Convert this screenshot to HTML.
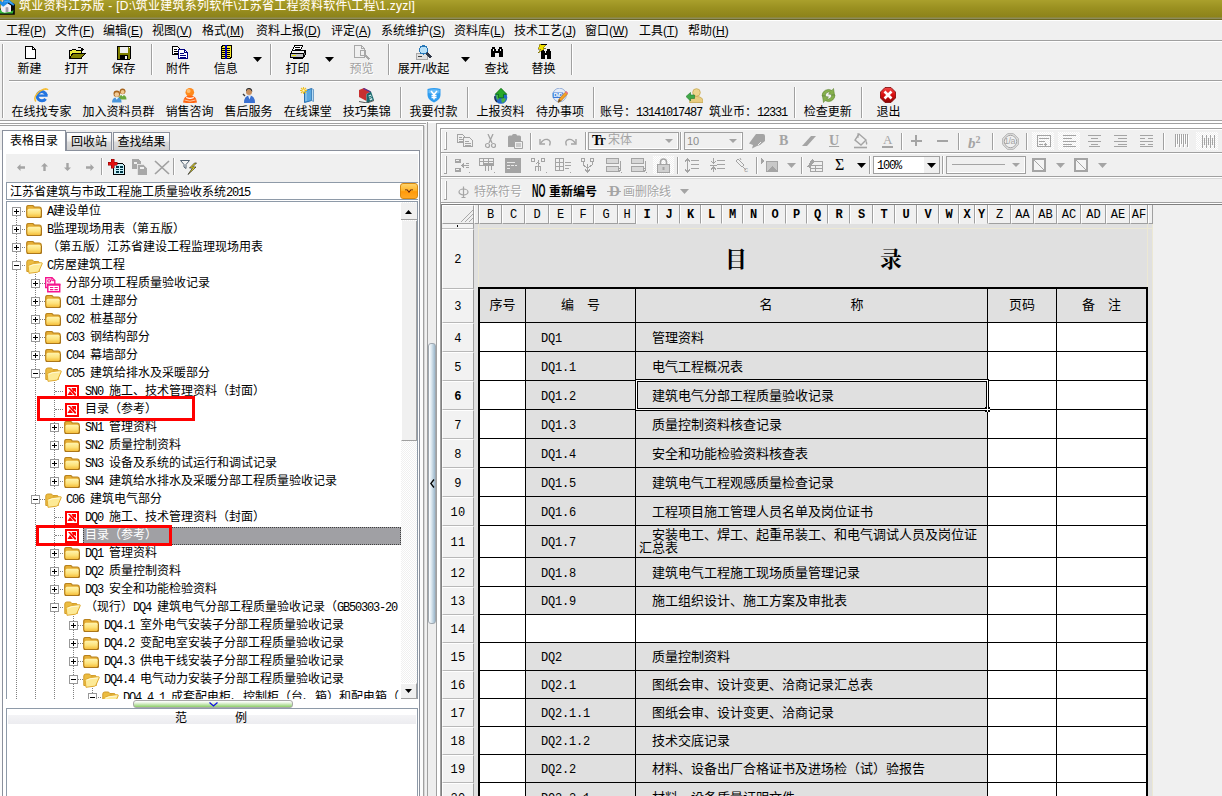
<!DOCTYPE html><html lang="zh-CN"><head><meta charset="utf-8"><title>筑业资料江苏版</title><style>
*{box-sizing:border-box;margin:0;padding:0}
html,body{width:1222px;height:796px;overflow:hidden;background:#f0f0f0}
body{position:relative;font:12px/14px "Liberation Sans","Noto Sans CJK SC",sans-serif;color:#000}
.a{position:absolute}
.ui{font-family:"Liberation Sans","Noto Sans CJK SC",sans-serif;font-size:12px;line-height:14px;white-space:nowrap}
.bm{font-family:"Liberation Mono","Noto Sans CJK SC",monospace;font-size:12px;line-height:14px;white-space:nowrap}
.bm i{font-style:normal;font-size:12px;letter-spacing:-1.2px}
.c13{font-family:"Liberation Mono","Noto Sans CJK SC",monospace;font-size:13px;line-height:13px;white-space:nowrap}
.c13 i{font-style:normal;font-size:12px;letter-spacing:-0.2px}
u{text-decoration:underline}
.vs{position:absolute;width:2px;border-left:1px solid #a0a0a0;border-right:1px solid #fff}
.hl{position:absolute;height:1px}
.tbl{position:absolute;text-align:center;white-space:nowrap}
</style></head><body>
<div class="a" style="left:0;top:0;width:1222px;height:20px;background:linear-gradient(#aaa02c 0,#9a9020 8px,#8d831a 17px,#8d8b5c 18px,#8d8b5c 19px,#6b6724 19px)"></div>
<svg class="a" style="left:0;top:0" width="16" height="16" viewBox="0 0 16 16">
<path d="M8 0.500L15 4.300 14.800 14.700 0 14.700 0 9Z" fill="#0a0a08"/>
<path d="M0 9.800Q4 9 7 10.500T13.600 10.300L12.800 13.600 0 13.600Z" fill="#35b436"/>
<path d="M0.800 5.500L6 2.200 11 5.500V11.800L7 12.300 4.500 12.800 2 11.800 0.800 9.500Z" fill="#f6eff4"/>
<path d="M5.600 7.600Q7 6.400 8.400 7.600V12H5.600Z" fill="#a79cab"/>
<path d="M1.600 0H3.200L3.500 2.500 2 3.500Z" fill="#e8c0b0"/>
<path d="M0 0.800L2.500 2.200 4 0H9.300L14.700 4.500 13.300 5.700 8.500 2.700 3.200 6.700 0 4Z" fill="#1e8ae6"/>
<path d="M4 2L8.500 1 12.500 4" stroke="#5ab4f4" stroke-width="0.800" fill="none"/>
</svg>
<div class="a ui" style="left:19px;top:-2px;letter-spacing:0.25px;color:#fff;font-size:12px;line-height:16px;text-shadow:0 0 1px #c8a428">筑业资料江苏版 - [D:\筑业建筑系列软件\江苏省工程资料软件\工程\1.zyzl]</div>
<div class="a" style="left:0;top:20px;width:1222px;height:1px;background:#fff"></div>
<div class="a ui" style="left:6px;top:23px;line-height:16px">工程(<u>P</u>)</div>
<div class="a ui" style="left:55px;top:23px;line-height:16px">文件(<u>F</u>)</div>
<div class="a ui" style="left:103px;top:23px;line-height:16px">编辑(<u>E</u>)</div>
<div class="a ui" style="left:152px;top:23px;line-height:16px">视图(<u>V</u>)</div>
<div class="a ui" style="left:202px;top:23px;line-height:16px">格式(<u>M</u>)</div>
<div class="a ui" style="left:256px;top:23px;line-height:16px">资料上报(<u>D</u>)</div>
<div class="a ui" style="left:331px;top:23px;line-height:16px">评定(<u>A</u>)</div>
<div class="a ui" style="left:381px;top:23px;line-height:16px">系统维护(<u>S</u>)</div>
<div class="a ui" style="left:454px;top:23px;line-height:16px">资料库(<u>L</u>)</div>
<div class="a ui" style="left:514px;top:23px;line-height:16px">技术工艺(<u>J</u>)</div>
<div class="a ui" style="left:585px;top:23px;line-height:16px">窗口(<u>W</u>)</div>
<div class="a ui" style="left:639px;top:23px;line-height:16px">工具(<u>T</u>)</div>
<div class="a ui" style="left:688px;top:23px;line-height:16px">帮助(<u>H</u>)</div>
<div class="a" style="left:0;top:40px;width:1222px;height:1px;background:#a0a0a0"></div>
<div class="a" style="left:0;top:41px;width:1222px;height:1px;background:#fff"></div>
<div class="a" style="left:2px;top:44px;width:1px;height:74px;background:#a0a0a0"></div>
<div class="a" style="left:3px;top:44px;width:1px;height:74px;background:#fff"></div>
<div class="tbl ui" style="left:-10.5px;top:62px;width:80px;">新建</div>
<svg class="a" style="left:25px;top:46px" width="11" height="13" viewBox="0 0 11 13" shape-rendering="crispEdges"><path d="M0.5 0.5h7l3 3v9h-10z" fill="#fff" stroke="#000"/><path d="M7.5 0.5v3h3" fill="none" stroke="#000"/></svg>
<div class="tbl ui" style="left:36.5px;top:62px;width:80px;">打开</div>
<svg class="a" style="left:69px;top:46px" width="17" height="13" viewBox="0 0 17 13" shape-rendering="crispEdges"><path d="M9 1.5h2.5M11.5 1.5l2 1.5v2M12 3.5h3" stroke="#000" fill="none"/><path d="M0.5 4.5h2l1-1h3l1 1h5v3h-9l-3 5z" fill="#e8e840" stroke="#000"/><path d="M0.5 12.5l3.5-5h12l-4 5z" fill="#808000" stroke="#000"/></svg>
<div class="tbl ui" style="left:83.5px;top:62px;width:80px;">保存</div>
<svg class="a" style="left:117px;top:46px" width="14" height="14" viewBox="0 0 14 14" shape-rendering="crispEdges"><path d="M0.5 0.5h13v12l-1 1h-12z" fill="#808000" stroke="#000"/><rect x="3" y="1" width="8" height="6" fill="#f0f0f0"/><rect x="3" y="9" width="8" height="4" fill="#000"/><rect x="8" y="10" width="2" height="3" fill="#f0f0f0"/><rect x="12" y="1" width="1" height="1" fill="#fff"/></svg>
<div class="tbl ui" style="left:138px;top:62px;width:80px;">附件</div>
<svg class="a" style="left:172px;top:46px" width="16" height="13" viewBox="0 0 16 13" shape-rendering="crispEdges"><path d="M0.5 0.5h5l2 2v6h-7z" fill="#fff" stroke="#000"/><path d="M2 3h3M2 5h4M2 7h4" stroke="#000"/><path d="M6.500 3.500h6l3 3v6h-9z" fill="#fff" stroke="#000080"/><path d="M8 7h4M8 9h6M8 11h6" stroke="#000080"/><path d="M12.500 3.500v3h3" fill="none" stroke="#000080"/></svg>
<div class="tbl ui" style="left:185.7px;top:62px;width:80px;">信息</div>
<svg class="a" style="left:220px;top:45px" width="12" height="14" viewBox="0 0 12 14" shape-rendering="crispEdges"><path d="M1.500 1.500l2-1h8v12l-2 1h-8z" fill="#f8e828" stroke="#000"/><path d="M6 0v14" stroke="#0000c0" stroke-width="2"/><path d="M2 3h3M2 5h3M2 7h3M2 9h3M2 11h3M7 3h3M7 5h3M7 7h3M7 9h3M7 11h3" stroke="#000"/></svg>
<div class="tbl ui" style="left:257.5px;top:62px;width:80px;">打印</div>
<svg class="a" style="left:290px;top:45px" width="16" height="14" viewBox="0 0 16 14" shape-rendering="crispEdges"><path d="M4.500 0.500h8l-2 5h-8z" fill="#fff" stroke="#000"/><path d="M5 2h5M4.500 4h5" stroke="#000"/><path d="M0.500 8.500l2-3h13l-2 3z" fill="#f0f0f0" stroke="#000"/><path d="M0.500 8.500h13v4h-13z" fill="#c0c0c0" stroke="#000"/><path d="M13.500 8.500l2-3v4l-2 3z" fill="#808080" stroke="#000"/><rect x="2" y="10" width="4" height="1" fill="#e8e800"/><path d="M2.500 13.500h10" stroke="#000"/></svg>
<div class="tbl ui" style="left:321.5px;top:62px;width:80px;color:#a0a0a0;text-shadow:1px 1px 0 #fff;">预览</div>
<svg class="a" style="left:354px;top:45px" width="16" height="15" viewBox="0 0 16 15" shape-rendering="crispEdges"><path d="M0.500 0.500h7l3 3v9h-10z" fill="none" stroke="#a8a8a8"/><path d="M7.500 0.500v3h3" fill="none" stroke="#a8a8a8"/><circle cx="9" cy="8" r="3" fill="none" stroke="#a8a8a8"/><path d="M11.500 10.500l4 4" stroke="#a8a8a8" stroke-width="1.6"/></svg>
<div class="tbl ui" style="left:383.5px;top:62px;width:80px;">展开/收起</div>
<svg class="a" style="left:416px;top:45px" width="16" height="15" viewBox="0 0 16 15" shape-rendering="crispEdges"><rect x="0.500" y="8.500" width="11" height="6" fill="#e0e0e0" stroke="#a8a8a8"/><path d="M2 11.500h4" stroke="#404040" stroke-width="1.500"/><circle cx="7.500" cy="5" r="4" fill="#b8e0f8" stroke="#2878b8" stroke-width="1.400"/><path d="M10.500 8l4.500 4.500" stroke="#303848" stroke-width="2.400"/></svg>
<div class="tbl ui" style="left:456.4px;top:62px;width:80px;">查找</div>
<svg class="a" style="left:491px;top:47px" width="12" height="11" viewBox="0 0 12 11" shape-rendering="crispEdges"><path d="M1 0h3v2h1v2h2V2h1V0h3v2h1v8H8V6H4v4H0V2h1z" fill="#000"/><path d="M2 2h1v2H2zM9 2h1v2H9z" fill="#fff"/></svg>
<div class="tbl ui" style="left:503.6px;top:62px;width:80px;">替换</div>
<svg class="a" style="left:536px;top:44px" width="16" height="15" viewBox="0 0 16 15" shape-rendering="crispEdges"><path d="M5 4h3v2h1v2h1V6h1V4h3v2h1v8h-4v-4H9v4H5V6z" fill="#000" transform="translate(0,1)"/><path d="M4 0h7l-4 4h3l-8 5 3-4H2z" fill="#f0e000" stroke="#605000" stroke-width="0.500"/><path d="M5 0.500h6" stroke="#000"/></svg>
<div class="vs" style="left:151px;top:44px;height:31px"></div>
<div class="vs" style="left:270px;top:44px;height:31px"></div>
<div class="vs" style="left:388px;top:44px;height:31px"></div>
<div class="vs" style="left:571px;top:44px;height:31px"></div>
<svg class="a" style="left:253px;top:57px" width="10" height="5" viewBox="0 0 10 5"><path d="M0 0h9L4.500 5z" fill="#000"/></svg>
<svg class="a" style="left:325px;top:57px" width="10" height="5" viewBox="0 0 10 5"><path d="M0 0h9L4.500 5z" fill="#000"/></svg>
<svg class="a" style="left:460.5px;top:57px" width="10" height="5" viewBox="0 0 10 5"><path d="M0 0h9L4.500 5z" fill="#000"/></svg>
<div class="a" style="left:9px;top:80px;width:1213px;height:1px;background:#a0a0a0"></div>
<div class="a" style="left:9px;top:81px;width:1213px;height:1px;background:#fff"></div>
<div class="tbl ui" style="left:-3.3999999999999986px;top:105px;width:90px">在线找专家</div>
<svg class="a" style="left:34px;top:88px" width="16" height="15" viewBox="0 0 16 15"><path d="M12.300 7.300A4.600 4.600 0 1 0 11.600 10.800" fill="none" stroke="#2274e0" stroke-width="3"/><path d="M3.600 7.600H13.600" stroke="#2274e0" stroke-width="2.300"/><path d="M1.800 13.500C-1.500 8.500 5 1.800 12.500 0.800" fill="none" stroke="#f6bc30" stroke-width="1.500"/><path d="M11 1.500q2.500-0.800 3 0.500" fill="none" stroke="#f6bc30" stroke-width="1.200"/></svg>
<div class="tbl ui" style="left:73.6px;top:105px;width:90px">加入资料员群</div>
<svg class="a" style="left:112px;top:88px" width="15" height="15" viewBox="0 0 15 15"><circle cx="10.600" cy="3.300" r="2.900" fill="#a8641c"/><circle cx="10.600" cy="4" r="2" fill="#f0c890"/><path d="M6.500 11.500q0-4.500 4-4.500t4 4.500z" fill="#6aa83c"/><path d="M9.500 7l1.100 1.600 1.100-1.600z" fill="#fff"/><circle cx="4.800" cy="5.800" r="3.300" fill="#a8641c"/><circle cx="4.800" cy="6.600" r="2.300" fill="#f2cc98"/><path d="M0 14.500q0-5 4.800-5t4.800 5z" fill="#4a96dc"/><path d="M3.300 9.500l1.500 2.200 1.500-2.200z" fill="#fff"/></svg>
<div class="tbl ui" style="left:144.5px;top:105px;width:90px">销售咨询</div>
<svg class="a" style="left:183px;top:88px" width="14" height="15" viewBox="0 0 14 15"><circle cx="6.800" cy="4.300" r="4.300" fill="#ff8a1c"/><circle cx="5.600" cy="3" r="2" fill="#ffc070"/><path d="M0 14.500q0.500-7 7-7t7 7q-7 1-14 0z" fill="#ff6412"/><path d="M3 8.800q4 2 8 0l-0.500 1.500q-3.500 1.500-7 0z" fill="#fff"/><path d="M1.500 12q5.500 2.500 11 0" stroke="#ffd0a8" fill="none" stroke-width="0.900"/></svg>
<div class="tbl ui" style="left:203.6px;top:105px;width:90px">售后服务</div>
<svg class="a" style="left:242px;top:88px" width="13" height="15" viewBox="0 0 13 15"><circle cx="7" cy="4" r="3" fill="#c89060"/><path d="M4 3.500q3-5 6.300 0.500 0-4-3.300-4t-3 3.500z" fill="#202020"/><path d="M2 15q0-7.500 5.500-7.500t5.500 7.500z" fill="#3a70d0"/><path d="M6 7.500l1.500 4 1.500-4z" fill="#e8f0ff"/><path d="M1 6l2 2" stroke="#404040" stroke-width="1.500"/></svg>
<div class="tbl ui" style="left:262.7px;top:105px;width:90px">在线课堂</div>
<svg class="a" style="left:300px;top:87px" width="15" height="16" viewBox="0 0 15 16"><path d="M4.500 4l7-2.500v12l-7 2z" fill="#5aa8e0" stroke="#2870b0"/><path d="M11.500 1.500l2 1v12l-2-1z" fill="#b8dcf4" stroke="#2870b0" stroke-width="0.600"/><path d="M6 5v9" stroke="#a8d4f0"/><path d="M3.500 0v7M0 3.500h7M1 1l5 5M6 1l-5 5" stroke="#f0c020" stroke-width="1.100"/><rect x="2.500" y="2.500" width="2" height="2" fill="#fff8c0"/></svg>
<div class="tbl ui" style="left:321.7px;top:105px;width:90px">技巧集锦</div>
<svg class="a" style="left:358px;top:88px" width="17" height="15" viewBox="0 0 17 15"><path d="M1 2l5-2 7 3.500-4.500 2.500v7l-7.500-4z" fill="#c83030"/><path d="M6 0l7 3.500-1 0.800-7-3.600z" fill="#5030a0"/><path d="M8.500 6l4.500-2.500 3 8.500-7.500 3z" fill="#18686c"/><path d="M10.500 7.500l2.500-1 1.500 5-2.500 1z" fill="#d8f0f0"/><path d="M11 9l2.500-1M11.500 10.500l2.500-1" stroke="#18686c"/><path d="M1 13.500l8 1.500 7-2.500" stroke="#303030" fill="none" stroke-width="0.800"/></svg>
<div class="tbl ui" style="left:388.5px;top:105px;width:90px">我要付款</div>
<svg class="a" style="left:427px;top:88px" width="14" height="15" viewBox="0 0 14 15"><path d="M0.500 1q6.500-2 13 0v6q0 5-6.500 7.500q-6.500-2.500-6.500-7.500z" fill="#2e9cf0"/><path d="M1.500 2q5.500-1.600 11 0v3q-5.500 2-11 0z" fill="#68bcf8"/><path d="M4 3l3 3.500 3-3.500M7 6.500v5M4.500 7.500h5M4.500 9.500h5" stroke="#fff" fill="none" stroke-width="1.500"/></svg>
<div class="tbl ui" style="left:455.5px;top:105px;width:90px">上报资料</div>
<svg class="a" style="left:493px;top:88px" width="16" height="16" viewBox="0 0 16 16"><circle cx="8" cy="9.500" r="6.300" fill="#2468c8"/><path d="M3 7q2-1 3 1t-1 4q-2-1-2-5zM8 11q3-2 5 0-1 3-4 4z" fill="#48b048"/><path d="M2 8a6.300 6.300 0 0 0 2 6" stroke="#203050" stroke-width="1.400" fill="none"/><path d="M8 0.300l5.800 6h-3.300v3.500h-5v-3.500h-3.300z" fill="#28a828" stroke="#0c6c10" stroke-width="0.800"/></svg>
<div class="tbl ui" style="left:515px;top:105px;width:90px">待办事项</div>
<svg class="a" style="left:552px;top:88px" width="16" height="15" viewBox="0 0 16 15"><circle cx="7.500" cy="7" r="6.800" fill="#e4ecf8" stroke="#98b0d8"/><circle cx="7.500" cy="7" r="1.500" fill="#fff" stroke="#b0c0e0" stroke-width="0.500"/><rect x="0.800" y="4.500" width="10.500" height="5.500" rx="0.800" fill="#3a78d8"/><text x="1.500" y="9" font-family="Liberation Sans" font-weight="bold" font-size="5.200" fill="#fff" textLength="9">DVD</text><path d="M6 14.500l1-3.500 7-7.500 2 2-7 7.500z" fill="#f4a028" stroke="#a06010" stroke-width="0.500"/><path d="M13.200 4l2 2 0.800-1-2-2z" fill="#e868a0"/><path d="M6 14.500l1-3.500 2 2z" fill="#6c4c20"/></svg>
<div class="tbl ui" style="left:782.8px;top:105px;width:90px">检查更新</div>
<svg class="a" style="left:821px;top:88px" width="15" height="15" viewBox="0 0 15 15"><path d="M1 8a6.500 6.500 0 0 1 10-5.500l1.500-2 1 6.500-6-1 1.700-1.600a3.400 3.400 0 0 0-4.800 3.600z" fill="#86b04c" stroke="#5c8430" stroke-width="0.600"/><path d="M14 7a6.500 6.500 0 0 1-10 5.500l-1.500 2-1-6.500 6 1-1.700 1.600a3.400 3.400 0 0 0 4.800-3.600z" fill="#86b04c" stroke="#5c8430" stroke-width="0.600"/></svg>
<div class="tbl ui" style="left:843.4px;top:105px;width:90px">退出</div>
<svg class="a" style="left:880px;top:87px" width="16" height="16" viewBox="0 0 16 16"><defs><linearGradient id="xg" x1="0" y1="0" x2="0" y2="1"><stop offset="0" stop-color="#f04848"/><stop offset="0.500" stop-color="#d81010"/><stop offset="1" stop-color="#8c0404"/></linearGradient></defs><path d="M5 0.500h6l4.500 4.500v6l-4.500 4.500h-6l-4.500-4.500v-6z" fill="url(#xg)" stroke="#7c0404" stroke-width="0.800"/><path d="M4.500 4.500l7 7M11.500 4.500l-7 7" stroke="#fff" stroke-width="2.600"/></svg>
<svg class="a" style="left:686px;top:88px" width="17" height="15" viewBox="0 0 17 15"><circle cx="10.500" cy="4.500" r="3.800" fill="#ecd48c" stroke="#c8a850" stroke-width="0.800"/><path d="M3.500 14.500q0-6 7-6t6.500 6z" fill="#e8cc80" stroke="#c8a850" stroke-width="0.800"/><path d="M0 8.500l4.500-4v2.500h4v3.500h-4v2.500z" fill="#40a848" stroke="#207828" stroke-width="0.600"/></svg>
<div class="a ui" style="left:600px;top:105px">账号：<span class="bm" style="letter-spacing:0"><i>13141017487</i></span></div>
<div class="a ui" style="left:709px;top:105px">筑业币：<span class="bm"><i>12331</i></span></div>
<div class="vs" style="left:400px;top:87px;height:31px"></div>
<div class="vs" style="left:467px;top:87px;height:31px"></div>
<div class="vs" style="left:593px;top:87px;height:31px"></div>
<div class="vs" style="left:794px;top:87px;height:31px"></div>
<div class="vs" style="left:861px;top:87px;height:31px"></div>
<div class="a" style="left:0;top:120px;width:1222px;height:1px;background:#a0a0a0"></div>
<div class="a" style="left:0;top:121px;width:1222px;height:2px;background:#fff"></div>
<div class="a" style="left:0;top:123px;width:1222px;height:1px;background:#a0a0a0"></div>
<div class="a" style="left:0;top:124px;width:1222px;height:1px;background:#fff"></div>
<div class="a" style="left:0;top:125px;width:1222px;height:1px;background:#a0a0a0"></div>
<div class="a" style="left:0;top:126px;width:423px;height:670px;background:#fbfbfb"></div>
<div class="a" style="left:426px;top:123px;width:10px;height:3px;background:#f0f0f0"></div>
<div class="a" style="left:424px;top:125px;width:3px;height:1px;background:#f0f0f0"></div>
<div class="a" style="left:423px;top:125px;width:1px;height:671px;background:#a0a0a0"></div>
<div class="a" style="left:424px;top:126px;width:2px;height:670px;background:linear-gradient(90deg,#c8c8c8,#fff)"></div>
<div class="a" style="left:427px;top:122px;width:1px;height:674px;background:#a0a0a0"></div>
<div class="a" style="left:428px;top:123px;width:8px;height:673px;background:#eee"></div>
<div class="a" style="left:0;top:130px;width:422px;height:20px;background:#ededed"></div>
<div class="a" style="left:2px;top:150px;width:418px;height:650px;background:#fff;border:1px solid #8a909c"></div>
<div class="a bm" style="left:66px;top:132px;width:46px;height:19px;border:1px solid #8a909c;background:linear-gradient(#fff 0,#f0f0f0 45%,#dcdcdc 55%,#cfcfcf 100%);text-align:center;line-height:19px;padding-top:1px">回收站</div>
<div class="a bm" style="left:113px;top:132px;width:57px;height:19px;border:1px solid #8a909c;background:linear-gradient(#fff 0,#f0f0f0 45%,#dcdcdc 55%,#cfcfcf 100%);text-align:center;line-height:19px;padding-top:1px">查找结果</div>
<div class="a bm" style="left:2px;top:130px;width:64px;height:21px;border:1px solid #8a909c;border-bottom:0;background:#fff;text-align:center;line-height:18px;padding-top:2px">表格目录</div>
<div class="a" style="left:6px;top:154px;width:412px;height:28px;background:#f0f0f0"></div>
<svg class="a" style="left:17px;top:164px" width="8" height="7" viewBox="0 0 8 7"><path d="M0 3.500L3.500 0V2.300H8V4.700H3.500V7z" fill="#a4a4a4"/></svg>
<svg class="a" style="left:41px;top:163px" width="7" height="8" viewBox="0 0 7 8"><path d="M3.500 0L7 3.500H4.700V8H2.300V3.500H0z" fill="#a4a4a4"/></svg>
<svg class="a" style="left:64px;top:163px" width="7" height="8" viewBox="0 0 7 8"><path d="M3.500 8L7 4.500H4.700V0H2.300V4.500H0z" fill="#a4a4a4"/></svg>
<svg class="a" style="left:86px;top:164px" width="8" height="7" viewBox="0 0 8 7"><path d="M8 3.500L4.500 0V2.300H0V4.700H4.500V7z" fill="#a4a4a4"/></svg>
<div class="vs" style="left:101px;top:158px;height:17px"></div>
<div class="vs" style="left:173px;top:158px;height:17px"></div>
<svg class="a" style="left:108px;top:159px" width="17" height="16" viewBox="0 0 17 16" shape-rendering="crispEdges"><path d="M5.500 4.500h9l2 2v9h-11z" fill="#c8f0f8" stroke="#000"/><path d="M16.500 6.500v9h-10" stroke="#000" stroke-width="1.600" fill="none"/><path d="M7.500 8h3M11.500 8h3M7.500 10.500h3M11.500 10.500h3M7.500 13h3M11.500 13h3" stroke="#003848" stroke-width="1.200"/><path d="M3 0h3v3h3v3h-3v3h-3v-3h-3v-3h3z" fill="#e01010" stroke="#800" stroke-width="0.500"/></svg>
<svg class="a" style="left:132px;top:159px" width="15" height="16" viewBox="0 0 15 16" shape-rendering="crispEdges"><path d="M0 0h6l3 3v7h-9z" fill="#a8a8a8"/><path d="M5 5h6l4 4v7h-10z" fill="#a8a8a8" stroke="#f0f0f0" stroke-width="0.800"/><path d="M2 3h3v2h-3zM8 8h4v2h-4z" fill="#f0f0f0"/></svg>
<svg class="a" style="left:154px;top:160px" width="16" height="15" viewBox="0 0 16 15"><path d="M1 1l14 13M15 1L1 14" stroke="#a0a0a0" stroke-width="1.700"/></svg>
<svg class="a" style="left:180px;top:160px" width="17" height="15" viewBox="0 0 17 15"><path d="M0.500 0.500h9l-3.500 4v4l-2-1.500v-2.500z" fill="#f4f4f4" stroke="#506070"/><path d="M14.500 3l-5 5h3l-4.500 6.500 8-7.500h-3.500l4-4z" fill="#f8e820" stroke="#202020" stroke-width="0.700"/></svg>
<div class="a" style="left:6px;top:182px;width:412px;height:18px;background:#fff;border:1px solid #8e9aa8;border-right:0"></div>
<div class="a bm" style="left:10px;top:186px">江苏省建筑与市政工程施工质量验收系统<i>2015</i></div>
<div class="a" style="left:400px;top:183px;width:18px;height:16px;border:1px solid #d88a10;border-radius:3px;background:linear-gradient(#ffd36a 0,#ffb62e 45%,#ff9a0a 55%,#ffa826 100%)"></div>
<svg class="a" style="left:405px;top:189px" width="8" height="4" viewBox="0 0 8 4"><path d="M0 0.500h2.500L4 2.500 5.500 0.500H8v0.800H6L4 4 2 1.300H0z" fill="#501008"/></svg>
<div class="a" style="left:6px;top:201px;width:412px;height:498px;background:#fff;border:1px solid #8e9aa8;border-bottom:0;overflow:hidden"></div>
<div class="a" style="left:7px;top:202px;width:394px;height:497px;overflow:hidden"><div class="a" style="left:-7px;top:-202px;width:440px;height:900px">
<div class="a" style="left:16px;top:211px;width:1px;height:9px;background-image:repeating-linear-gradient(180deg,#808080 0,#808080 1px,transparent 1px,transparent 2px);background-position:0 1px"></div>
<div class="a" style="left:17px;top:211px;width:9px;height:1px;background-image:repeating-linear-gradient(90deg,#808080 0,#808080 1px,transparent 1px,transparent 2px);background-position:1px 0"></div>
<div class="a" style="left:12px;top:207px;width:9px;height:9px;background:#fff;border:1px solid #989898"></div>
<div class="a" style="left:14px;top:211px;width:5px;height:1px;background:#000"></div>
<div class="a" style="left:16px;top:209px;width:1px;height:5px;background:#000"></div>
<svg class="a" style="left:26px;top:205px" width="16" height="13" viewBox="0 0 16 13"><defs><linearGradient id="fg" x1="0" y1="0" x2="0" y2="1"><stop offset="0" stop-color="#fff4ae"/><stop offset="0.550" stop-color="#fde27a"/><stop offset="1" stop-color="#f5bf3c"/></linearGradient></defs><path d="M0.700 2.500q0-2 2-2h3.300q1.500 0 2.200 1.500h5q2 0 2 2v6.500q0 2-2 2h-10.500q-2 0-2-2z" fill="#e6ae34" stroke="#b8821c" stroke-width="1.200"/><path d="M1.500 5.300q0-1.500 1.500-1.500h10.200q1.500 0 1.500 1.500v5.200q0 1.500-1.500 1.500h-10.200q-1.500 0-1.500-1.500z" fill="url(#fg)"/><path d="M1 11.800q1 1 2.500 1h10q2 0 2-2v-6" fill="none" stroke="#a8741a" stroke-width="1.100"/></svg>
<div class="a bm" style="left:47px;top:205px"><i>A</i>建设单位</div>
<div class="a" style="left:16px;top:220px;width:1px;height:18px;background-image:repeating-linear-gradient(180deg,#808080 0,#808080 1px,transparent 1px,transparent 2px);background-position:0 0px"></div>
<div class="a" style="left:17px;top:229px;width:9px;height:1px;background-image:repeating-linear-gradient(90deg,#808080 0,#808080 1px,transparent 1px,transparent 2px);background-position:1px 0"></div>
<div class="a" style="left:12px;top:225px;width:9px;height:9px;background:#fff;border:1px solid #989898"></div>
<div class="a" style="left:14px;top:229px;width:5px;height:1px;background:#000"></div>
<div class="a" style="left:16px;top:227px;width:1px;height:5px;background:#000"></div>
<svg class="a" style="left:26px;top:223px" width="16" height="13" viewBox="0 0 16 13"><defs><linearGradient id="fg" x1="0" y1="0" x2="0" y2="1"><stop offset="0" stop-color="#fff4ae"/><stop offset="0.550" stop-color="#fde27a"/><stop offset="1" stop-color="#f5bf3c"/></linearGradient></defs><path d="M0.700 2.500q0-2 2-2h3.300q1.500 0 2.200 1.500h5q2 0 2 2v6.500q0 2-2 2h-10.500q-2 0-2-2z" fill="#e6ae34" stroke="#b8821c" stroke-width="1.200"/><path d="M1.500 5.300q0-1.500 1.500-1.500h10.200q1.500 0 1.500 1.500v5.200q0 1.500-1.500 1.500h-10.200q-1.500 0-1.500-1.500z" fill="url(#fg)"/><path d="M1 11.800q1 1 2.500 1h10q2 0 2-2v-6" fill="none" stroke="#a8741a" stroke-width="1.100"/></svg>
<div class="a bm" style="left:47px;top:223px"><i>B</i>监理现场用表（第五版）</div>
<div class="a" style="left:16px;top:238px;width:1px;height:18px;background-image:repeating-linear-gradient(180deg,#808080 0,#808080 1px,transparent 1px,transparent 2px);background-position:0 0px"></div>
<div class="a" style="left:17px;top:247px;width:9px;height:1px;background-image:repeating-linear-gradient(90deg,#808080 0,#808080 1px,transparent 1px,transparent 2px);background-position:1px 0"></div>
<div class="a" style="left:12px;top:243px;width:9px;height:9px;background:#fff;border:1px solid #989898"></div>
<div class="a" style="left:14px;top:247px;width:5px;height:1px;background:#000"></div>
<div class="a" style="left:16px;top:245px;width:1px;height:5px;background:#000"></div>
<svg class="a" style="left:26px;top:241px" width="16" height="13" viewBox="0 0 16 13"><defs><linearGradient id="fg" x1="0" y1="0" x2="0" y2="1"><stop offset="0" stop-color="#fff4ae"/><stop offset="0.550" stop-color="#fde27a"/><stop offset="1" stop-color="#f5bf3c"/></linearGradient></defs><path d="M0.700 2.500q0-2 2-2h3.300q1.500 0 2.200 1.500h5q2 0 2 2v6.500q0 2-2 2h-10.500q-2 0-2-2z" fill="#e6ae34" stroke="#b8821c" stroke-width="1.200"/><path d="M1.500 5.300q0-1.500 1.500-1.500h10.200q1.500 0 1.500 1.500v5.200q0 1.500-1.500 1.500h-10.200q-1.500 0-1.500-1.500z" fill="url(#fg)"/><path d="M1 11.800q1 1 2.500 1h10q2 0 2-2v-6" fill="none" stroke="#a8741a" stroke-width="1.100"/></svg>
<div class="a bm" style="left:47px;top:241px">（第五版）江苏省建设工程监理现场用表</div>
<div class="a" style="left:16px;top:256px;width:1px;height:18px;background-image:repeating-linear-gradient(180deg,#808080 0,#808080 1px,transparent 1px,transparent 2px);background-position:0 0px"></div>
<div class="a" style="left:17px;top:265px;width:9px;height:1px;background-image:repeating-linear-gradient(90deg,#808080 0,#808080 1px,transparent 1px,transparent 2px);background-position:1px 0"></div>
<div class="a" style="left:12px;top:261px;width:9px;height:9px;background:#fff;border:1px solid #989898"></div>
<div class="a" style="left:14px;top:265px;width:5px;height:1px;background:#000"></div>
<div class="a" style="left:35px;top:272px;width:1px;height:2px;background-image:repeating-linear-gradient(180deg,#808080 0,#808080 1px,transparent 1px,transparent 2px);background-position:0 0px"></div>
<svg class="a" style="left:26px;top:259px" width="17" height="15" viewBox="0 0 17 15"><path d="M0.800 3q0-2 2-2h3q1.500 0 2 1.500h4q1.500 0 1.500 1.500v8.500h-12.500z" fill="#ecbc40" stroke="#d09a28"/><path d="M7.500 4l4.500-1.500v9" fill="none" stroke="#d8a430" stroke-width="0.800"/><path d="M3 14.300l-0.800-7q0-1 1-1.300l4-1.500 8.300-0.800q1 0 0.700 1l-3.200 7.300q-0.500 1-1.500 1.200z" fill="#fdea96" stroke="#e0aa30"/><path d="M3.800 7.200l4-1.500 7-0.700" fill="none" stroke="#fff8d4"/></svg>
<div class="a bm" style="left:47px;top:259px"><i>C</i>房屋建筑工程</div>
<div class="a" style="left:16px;top:274px;width:1px;height:18px;background-image:repeating-linear-gradient(180deg,#808080 0,#808080 1px,transparent 1px,transparent 2px);background-position:0 0px"></div>
<div class="a" style="left:35px;top:274px;width:1px;height:18px;background-image:repeating-linear-gradient(180deg,#808080 0,#808080 1px,transparent 1px,transparent 2px);background-position:0 0px"></div>
<div class="a" style="left:36px;top:283px;width:9px;height:1px;background-image:repeating-linear-gradient(90deg,#808080 0,#808080 1px,transparent 1px,transparent 2px);background-position:0px 0"></div>
<div class="a" style="left:31px;top:279px;width:9px;height:9px;background:#fff;border:1px solid #989898"></div>
<div class="a" style="left:33px;top:283px;width:5px;height:1px;background:#000"></div>
<div class="a" style="left:35px;top:281px;width:1px;height:5px;background:#000"></div>
<svg class="a" style="left:45px;top:277px" width="16" height="16" viewBox="0 0 16 16"><path d="M0.700 0.700h6.300l2.800 2.800v7h-9.100z" fill="#fff" stroke="#f5148e" stroke-width="1.400"/><path d="M6.800 0.700v3h3" fill="none" stroke="#f5148e"/><path d="M2.800 2.800h2.700v2.200h-2.700z" fill="#fff" stroke="#f5148e"/><path d="M2.800 7.800h11.900v6.900h-11.900z" fill="#fff" stroke="#f5148e" stroke-width="1.500"/><path d="M2 7.500h13.400" stroke="#f5148e" stroke-width="2"/><path d="M5 10.500h3.300M9.500 10.500h3.300M5 12.600h3.300M9.500 12.600h3.300" stroke="#f5148e" stroke-width="1.100"/></svg>
<div class="a bm" style="left:66px;top:277px">分部分项工程质量验收记录</div>
<div class="a" style="left:16px;top:292px;width:1px;height:18px;background-image:repeating-linear-gradient(180deg,#808080 0,#808080 1px,transparent 1px,transparent 2px);background-position:0 0px"></div>
<div class="a" style="left:35px;top:292px;width:1px;height:18px;background-image:repeating-linear-gradient(180deg,#808080 0,#808080 1px,transparent 1px,transparent 2px);background-position:0 0px"></div>
<div class="a" style="left:36px;top:301px;width:9px;height:1px;background-image:repeating-linear-gradient(90deg,#808080 0,#808080 1px,transparent 1px,transparent 2px);background-position:0px 0"></div>
<div class="a" style="left:31px;top:297px;width:9px;height:9px;background:#fff;border:1px solid #989898"></div>
<div class="a" style="left:33px;top:301px;width:5px;height:1px;background:#000"></div>
<div class="a" style="left:35px;top:299px;width:1px;height:5px;background:#000"></div>
<svg class="a" style="left:45px;top:295px" width="16" height="13" viewBox="0 0 16 13"><defs><linearGradient id="fg" x1="0" y1="0" x2="0" y2="1"><stop offset="0" stop-color="#fff4ae"/><stop offset="0.550" stop-color="#fde27a"/><stop offset="1" stop-color="#f5bf3c"/></linearGradient></defs><path d="M0.700 2.500q0-2 2-2h3.300q1.500 0 2.200 1.500h5q2 0 2 2v6.500q0 2-2 2h-10.500q-2 0-2-2z" fill="#e6ae34" stroke="#b8821c" stroke-width="1.200"/><path d="M1.500 5.300q0-1.500 1.500-1.500h10.200q1.500 0 1.500 1.500v5.200q0 1.500-1.500 1.500h-10.200q-1.500 0-1.500-1.500z" fill="url(#fg)"/><path d="M1 11.800q1 1 2.500 1h10q2 0 2-2v-6" fill="none" stroke="#a8741a" stroke-width="1.100"/></svg>
<div class="a bm" style="left:66px;top:295px"><i>C01 </i>土建部分</div>
<div class="a" style="left:16px;top:310px;width:1px;height:18px;background-image:repeating-linear-gradient(180deg,#808080 0,#808080 1px,transparent 1px,transparent 2px);background-position:0 0px"></div>
<div class="a" style="left:35px;top:310px;width:1px;height:18px;background-image:repeating-linear-gradient(180deg,#808080 0,#808080 1px,transparent 1px,transparent 2px);background-position:0 0px"></div>
<div class="a" style="left:36px;top:319px;width:9px;height:1px;background-image:repeating-linear-gradient(90deg,#808080 0,#808080 1px,transparent 1px,transparent 2px);background-position:0px 0"></div>
<div class="a" style="left:31px;top:315px;width:9px;height:9px;background:#fff;border:1px solid #989898"></div>
<div class="a" style="left:33px;top:319px;width:5px;height:1px;background:#000"></div>
<div class="a" style="left:35px;top:317px;width:1px;height:5px;background:#000"></div>
<svg class="a" style="left:45px;top:313px" width="16" height="13" viewBox="0 0 16 13"><defs><linearGradient id="fg" x1="0" y1="0" x2="0" y2="1"><stop offset="0" stop-color="#fff4ae"/><stop offset="0.550" stop-color="#fde27a"/><stop offset="1" stop-color="#f5bf3c"/></linearGradient></defs><path d="M0.700 2.500q0-2 2-2h3.300q1.500 0 2.200 1.500h5q2 0 2 2v6.500q0 2-2 2h-10.500q-2 0-2-2z" fill="#e6ae34" stroke="#b8821c" stroke-width="1.200"/><path d="M1.500 5.300q0-1.500 1.500-1.500h10.200q1.500 0 1.500 1.500v5.200q0 1.500-1.500 1.500h-10.200q-1.500 0-1.500-1.500z" fill="url(#fg)"/><path d="M1 11.800q1 1 2.500 1h10q2 0 2-2v-6" fill="none" stroke="#a8741a" stroke-width="1.100"/></svg>
<div class="a bm" style="left:66px;top:313px"><i>C02 </i>桩基部分</div>
<div class="a" style="left:16px;top:328px;width:1px;height:18px;background-image:repeating-linear-gradient(180deg,#808080 0,#808080 1px,transparent 1px,transparent 2px);background-position:0 0px"></div>
<div class="a" style="left:35px;top:328px;width:1px;height:18px;background-image:repeating-linear-gradient(180deg,#808080 0,#808080 1px,transparent 1px,transparent 2px);background-position:0 0px"></div>
<div class="a" style="left:36px;top:337px;width:9px;height:1px;background-image:repeating-linear-gradient(90deg,#808080 0,#808080 1px,transparent 1px,transparent 2px);background-position:0px 0"></div>
<div class="a" style="left:31px;top:333px;width:9px;height:9px;background:#fff;border:1px solid #989898"></div>
<div class="a" style="left:33px;top:337px;width:5px;height:1px;background:#000"></div>
<div class="a" style="left:35px;top:335px;width:1px;height:5px;background:#000"></div>
<svg class="a" style="left:45px;top:331px" width="16" height="13" viewBox="0 0 16 13"><defs><linearGradient id="fg" x1="0" y1="0" x2="0" y2="1"><stop offset="0" stop-color="#fff4ae"/><stop offset="0.550" stop-color="#fde27a"/><stop offset="1" stop-color="#f5bf3c"/></linearGradient></defs><path d="M0.700 2.500q0-2 2-2h3.300q1.500 0 2.200 1.500h5q2 0 2 2v6.500q0 2-2 2h-10.500q-2 0-2-2z" fill="#e6ae34" stroke="#b8821c" stroke-width="1.200"/><path d="M1.500 5.300q0-1.500 1.500-1.500h10.200q1.500 0 1.500 1.500v5.200q0 1.500-1.500 1.500h-10.200q-1.500 0-1.500-1.500z" fill="url(#fg)"/><path d="M1 11.800q1 1 2.500 1h10q2 0 2-2v-6" fill="none" stroke="#a8741a" stroke-width="1.100"/></svg>
<div class="a bm" style="left:66px;top:331px"><i>C03 </i>钢结构部分</div>
<div class="a" style="left:16px;top:346px;width:1px;height:18px;background-image:repeating-linear-gradient(180deg,#808080 0,#808080 1px,transparent 1px,transparent 2px);background-position:0 0px"></div>
<div class="a" style="left:35px;top:346px;width:1px;height:18px;background-image:repeating-linear-gradient(180deg,#808080 0,#808080 1px,transparent 1px,transparent 2px);background-position:0 0px"></div>
<div class="a" style="left:36px;top:355px;width:9px;height:1px;background-image:repeating-linear-gradient(90deg,#808080 0,#808080 1px,transparent 1px,transparent 2px);background-position:0px 0"></div>
<div class="a" style="left:31px;top:351px;width:9px;height:9px;background:#fff;border:1px solid #989898"></div>
<div class="a" style="left:33px;top:355px;width:5px;height:1px;background:#000"></div>
<div class="a" style="left:35px;top:353px;width:1px;height:5px;background:#000"></div>
<svg class="a" style="left:45px;top:349px" width="16" height="13" viewBox="0 0 16 13"><defs><linearGradient id="fg" x1="0" y1="0" x2="0" y2="1"><stop offset="0" stop-color="#fff4ae"/><stop offset="0.550" stop-color="#fde27a"/><stop offset="1" stop-color="#f5bf3c"/></linearGradient></defs><path d="M0.700 2.500q0-2 2-2h3.300q1.500 0 2.200 1.500h5q2 0 2 2v6.500q0 2-2 2h-10.500q-2 0-2-2z" fill="#e6ae34" stroke="#b8821c" stroke-width="1.200"/><path d="M1.500 5.300q0-1.500 1.500-1.500h10.200q1.500 0 1.500 1.500v5.200q0 1.500-1.500 1.500h-10.200q-1.500 0-1.500-1.500z" fill="url(#fg)"/><path d="M1 11.800q1 1 2.500 1h10q2 0 2-2v-6" fill="none" stroke="#a8741a" stroke-width="1.100"/></svg>
<div class="a bm" style="left:66px;top:349px"><i>C04 </i>幕墙部分</div>
<div class="a" style="left:16px;top:364px;width:1px;height:18px;background-image:repeating-linear-gradient(180deg,#808080 0,#808080 1px,transparent 1px,transparent 2px);background-position:0 0px"></div>
<div class="a" style="left:35px;top:364px;width:1px;height:18px;background-image:repeating-linear-gradient(180deg,#808080 0,#808080 1px,transparent 1px,transparent 2px);background-position:0 0px"></div>
<div class="a" style="left:36px;top:373px;width:9px;height:1px;background-image:repeating-linear-gradient(90deg,#808080 0,#808080 1px,transparent 1px,transparent 2px);background-position:0px 0"></div>
<div class="a" style="left:31px;top:369px;width:9px;height:9px;background:#fff;border:1px solid #989898"></div>
<div class="a" style="left:33px;top:373px;width:5px;height:1px;background:#000"></div>
<div class="a" style="left:54px;top:380px;width:1px;height:2px;background-image:repeating-linear-gradient(180deg,#808080 0,#808080 1px,transparent 1px,transparent 2px);background-position:0 0px"></div>
<svg class="a" style="left:45px;top:367px" width="17" height="15" viewBox="0 0 17 15"><path d="M0.800 3q0-2 2-2h3q1.500 0 2 1.500h4q1.500 0 1.500 1.500v8.500h-12.500z" fill="#ecbc40" stroke="#d09a28"/><path d="M7.500 4l4.500-1.500v9" fill="none" stroke="#d8a430" stroke-width="0.800"/><path d="M3 14.300l-0.800-7q0-1 1-1.300l4-1.500 8.300-0.800q1 0 0.700 1l-3.200 7.300q-0.500 1-1.500 1.200z" fill="#fdea96" stroke="#e0aa30"/><path d="M3.800 7.200l4-1.500 7-0.700" fill="none" stroke="#fff8d4"/></svg>
<div class="a bm" style="left:66px;top:367px"><i>C05 </i>建筑给排水及采暖部分</div>
<div class="a" style="left:16px;top:382px;width:1px;height:18px;background-image:repeating-linear-gradient(180deg,#808080 0,#808080 1px,transparent 1px,transparent 2px);background-position:0 0px"></div>
<div class="a" style="left:35px;top:382px;width:1px;height:18px;background-image:repeating-linear-gradient(180deg,#808080 0,#808080 1px,transparent 1px,transparent 2px);background-position:0 0px"></div>
<div class="a" style="left:54px;top:382px;width:1px;height:18px;background-image:repeating-linear-gradient(180deg,#808080 0,#808080 1px,transparent 1px,transparent 2px);background-position:0 0px"></div>
<div class="a" style="left:55px;top:391px;width:9px;height:1px;background-image:repeating-linear-gradient(90deg,#808080 0,#808080 1px,transparent 1px,transparent 2px);background-position:1px 0"></div>
<svg class="a" style="left:65px;top:385px" width="14" height="14" viewBox="0 0 14 14"><rect width="14" height="14" fill="#f00"/><rect x="2" y="2" width="10" height="10" fill="#fff"/><path d="M3 3h2l6 6v1.500h-1.500z" fill="#f00"/><path d="M6.500 3h4.500v4.500l-1.500-1.500-1 1z" fill="#f00"/><path d="M2.500 10l2.500-4 3 4z" fill="#f00"/></svg>
<div class="a bm" style="left:85px;top:385px"><i>SN0 </i>施工、技术管理资料（封面）</div>
<div class="a" style="left:16px;top:400px;width:1px;height:18px;background-image:repeating-linear-gradient(180deg,#808080 0,#808080 1px,transparent 1px,transparent 2px);background-position:0 0px"></div>
<div class="a" style="left:35px;top:400px;width:1px;height:18px;background-image:repeating-linear-gradient(180deg,#808080 0,#808080 1px,transparent 1px,transparent 2px);background-position:0 0px"></div>
<div class="a" style="left:54px;top:400px;width:1px;height:18px;background-image:repeating-linear-gradient(180deg,#808080 0,#808080 1px,transparent 1px,transparent 2px);background-position:0 0px"></div>
<div class="a" style="left:55px;top:409px;width:9px;height:1px;background-image:repeating-linear-gradient(90deg,#808080 0,#808080 1px,transparent 1px,transparent 2px);background-position:1px 0"></div>
<svg class="a" style="left:65px;top:403px" width="14" height="14" viewBox="0 0 14 14"><rect width="14" height="14" fill="#f00"/><rect x="2" y="2" width="10" height="10" fill="#fff"/><path d="M3 3h2l6 6v1.500h-1.500z" fill="#f00"/><path d="M6.500 3h4.500v4.500l-1.500-1.500-1 1z" fill="#f00"/><path d="M2.500 10l2.500-4 3 4z" fill="#f00"/></svg>
<div class="a bm" style="left:85px;top:403px">目录（参考）</div>
<div class="a" style="left:16px;top:418px;width:1px;height:18px;background-image:repeating-linear-gradient(180deg,#808080 0,#808080 1px,transparent 1px,transparent 2px);background-position:0 0px"></div>
<div class="a" style="left:35px;top:418px;width:1px;height:18px;background-image:repeating-linear-gradient(180deg,#808080 0,#808080 1px,transparent 1px,transparent 2px);background-position:0 0px"></div>
<div class="a" style="left:54px;top:418px;width:1px;height:18px;background-image:repeating-linear-gradient(180deg,#808080 0,#808080 1px,transparent 1px,transparent 2px);background-position:0 0px"></div>
<div class="a" style="left:55px;top:427px;width:9px;height:1px;background-image:repeating-linear-gradient(90deg,#808080 0,#808080 1px,transparent 1px,transparent 2px);background-position:1px 0"></div>
<div class="a" style="left:50px;top:423px;width:9px;height:9px;background:#fff;border:1px solid #989898"></div>
<div class="a" style="left:52px;top:427px;width:5px;height:1px;background:#000"></div>
<div class="a" style="left:54px;top:425px;width:1px;height:5px;background:#000"></div>
<svg class="a" style="left:64px;top:421px" width="16" height="13" viewBox="0 0 16 13"><defs><linearGradient id="fg" x1="0" y1="0" x2="0" y2="1"><stop offset="0" stop-color="#fff4ae"/><stop offset="0.550" stop-color="#fde27a"/><stop offset="1" stop-color="#f5bf3c"/></linearGradient></defs><path d="M0.700 2.500q0-2 2-2h3.300q1.500 0 2.200 1.500h5q2 0 2 2v6.500q0 2-2 2h-10.500q-2 0-2-2z" fill="#e6ae34" stroke="#b8821c" stroke-width="1.200"/><path d="M1.500 5.300q0-1.500 1.500-1.500h10.200q1.500 0 1.500 1.500v5.200q0 1.500-1.500 1.500h-10.200q-1.500 0-1.500-1.500z" fill="url(#fg)"/><path d="M1 11.800q1 1 2.500 1h10q2 0 2-2v-6" fill="none" stroke="#a8741a" stroke-width="1.100"/></svg>
<div class="a bm" style="left:85px;top:421px"><i>SN1 </i>管理资料</div>
<div class="a" style="left:16px;top:436px;width:1px;height:18px;background-image:repeating-linear-gradient(180deg,#808080 0,#808080 1px,transparent 1px,transparent 2px);background-position:0 0px"></div>
<div class="a" style="left:35px;top:436px;width:1px;height:18px;background-image:repeating-linear-gradient(180deg,#808080 0,#808080 1px,transparent 1px,transparent 2px);background-position:0 0px"></div>
<div class="a" style="left:54px;top:436px;width:1px;height:18px;background-image:repeating-linear-gradient(180deg,#808080 0,#808080 1px,transparent 1px,transparent 2px);background-position:0 0px"></div>
<div class="a" style="left:55px;top:445px;width:9px;height:1px;background-image:repeating-linear-gradient(90deg,#808080 0,#808080 1px,transparent 1px,transparent 2px);background-position:1px 0"></div>
<div class="a" style="left:50px;top:441px;width:9px;height:9px;background:#fff;border:1px solid #989898"></div>
<div class="a" style="left:52px;top:445px;width:5px;height:1px;background:#000"></div>
<div class="a" style="left:54px;top:443px;width:1px;height:5px;background:#000"></div>
<svg class="a" style="left:64px;top:439px" width="16" height="13" viewBox="0 0 16 13"><defs><linearGradient id="fg" x1="0" y1="0" x2="0" y2="1"><stop offset="0" stop-color="#fff4ae"/><stop offset="0.550" stop-color="#fde27a"/><stop offset="1" stop-color="#f5bf3c"/></linearGradient></defs><path d="M0.700 2.500q0-2 2-2h3.300q1.500 0 2.200 1.500h5q2 0 2 2v6.500q0 2-2 2h-10.500q-2 0-2-2z" fill="#e6ae34" stroke="#b8821c" stroke-width="1.200"/><path d="M1.500 5.300q0-1.500 1.500-1.500h10.200q1.500 0 1.500 1.500v5.200q0 1.500-1.500 1.500h-10.200q-1.500 0-1.500-1.500z" fill="url(#fg)"/><path d="M1 11.800q1 1 2.500 1h10q2 0 2-2v-6" fill="none" stroke="#a8741a" stroke-width="1.100"/></svg>
<div class="a bm" style="left:85px;top:439px"><i>SN2 </i>质量控制资料</div>
<div class="a" style="left:16px;top:454px;width:1px;height:18px;background-image:repeating-linear-gradient(180deg,#808080 0,#808080 1px,transparent 1px,transparent 2px);background-position:0 0px"></div>
<div class="a" style="left:35px;top:454px;width:1px;height:18px;background-image:repeating-linear-gradient(180deg,#808080 0,#808080 1px,transparent 1px,transparent 2px);background-position:0 0px"></div>
<div class="a" style="left:54px;top:454px;width:1px;height:18px;background-image:repeating-linear-gradient(180deg,#808080 0,#808080 1px,transparent 1px,transparent 2px);background-position:0 0px"></div>
<div class="a" style="left:55px;top:463px;width:9px;height:1px;background-image:repeating-linear-gradient(90deg,#808080 0,#808080 1px,transparent 1px,transparent 2px);background-position:1px 0"></div>
<div class="a" style="left:50px;top:459px;width:9px;height:9px;background:#fff;border:1px solid #989898"></div>
<div class="a" style="left:52px;top:463px;width:5px;height:1px;background:#000"></div>
<div class="a" style="left:54px;top:461px;width:1px;height:5px;background:#000"></div>
<svg class="a" style="left:64px;top:457px" width="16" height="13" viewBox="0 0 16 13"><defs><linearGradient id="fg" x1="0" y1="0" x2="0" y2="1"><stop offset="0" stop-color="#fff4ae"/><stop offset="0.550" stop-color="#fde27a"/><stop offset="1" stop-color="#f5bf3c"/></linearGradient></defs><path d="M0.700 2.500q0-2 2-2h3.300q1.500 0 2.200 1.500h5q2 0 2 2v6.500q0 2-2 2h-10.500q-2 0-2-2z" fill="#e6ae34" stroke="#b8821c" stroke-width="1.200"/><path d="M1.500 5.300q0-1.500 1.500-1.500h10.200q1.500 0 1.500 1.500v5.200q0 1.500-1.500 1.500h-10.200q-1.500 0-1.500-1.500z" fill="url(#fg)"/><path d="M1 11.800q1 1 2.500 1h10q2 0 2-2v-6" fill="none" stroke="#a8741a" stroke-width="1.100"/></svg>
<div class="a bm" style="left:85px;top:457px"><i>SN3 </i>设备及系统的试运行和调试记录</div>
<div class="a" style="left:16px;top:472px;width:1px;height:18px;background-image:repeating-linear-gradient(180deg,#808080 0,#808080 1px,transparent 1px,transparent 2px);background-position:0 0px"></div>
<div class="a" style="left:35px;top:472px;width:1px;height:18px;background-image:repeating-linear-gradient(180deg,#808080 0,#808080 1px,transparent 1px,transparent 2px);background-position:0 0px"></div>
<div class="a" style="left:54px;top:472px;width:1px;height:18px;background-image:repeating-linear-gradient(180deg,#808080 0,#808080 1px,transparent 1px,transparent 2px);background-position:0 0px"></div>
<div class="a" style="left:55px;top:481px;width:9px;height:1px;background-image:repeating-linear-gradient(90deg,#808080 0,#808080 1px,transparent 1px,transparent 2px);background-position:1px 0"></div>
<div class="a" style="left:50px;top:477px;width:9px;height:9px;background:#fff;border:1px solid #989898"></div>
<div class="a" style="left:52px;top:481px;width:5px;height:1px;background:#000"></div>
<div class="a" style="left:54px;top:479px;width:1px;height:5px;background:#000"></div>
<svg class="a" style="left:64px;top:475px" width="16" height="13" viewBox="0 0 16 13"><defs><linearGradient id="fg" x1="0" y1="0" x2="0" y2="1"><stop offset="0" stop-color="#fff4ae"/><stop offset="0.550" stop-color="#fde27a"/><stop offset="1" stop-color="#f5bf3c"/></linearGradient></defs><path d="M0.700 2.500q0-2 2-2h3.300q1.500 0 2.200 1.500h5q2 0 2 2v6.500q0 2-2 2h-10.500q-2 0-2-2z" fill="#e6ae34" stroke="#b8821c" stroke-width="1.200"/><path d="M1.500 5.300q0-1.500 1.500-1.500h10.200q1.500 0 1.500 1.500v5.200q0 1.500-1.500 1.500h-10.200q-1.500 0-1.500-1.500z" fill="url(#fg)"/><path d="M1 11.800q1 1 2.500 1h10q2 0 2-2v-6" fill="none" stroke="#a8741a" stroke-width="1.100"/></svg>
<div class="a bm" style="left:85px;top:475px"><i>SN4 </i>建筑给水排水及采暖分部工程质量验收记录</div>
<div class="a" style="left:16px;top:490px;width:1px;height:18px;background-image:repeating-linear-gradient(180deg,#808080 0,#808080 1px,transparent 1px,transparent 2px);background-position:0 0px"></div>
<div class="a" style="left:35px;top:490px;width:1px;height:18px;background-image:repeating-linear-gradient(180deg,#808080 0,#808080 1px,transparent 1px,transparent 2px);background-position:0 0px"></div>
<div class="a" style="left:36px;top:499px;width:9px;height:1px;background-image:repeating-linear-gradient(90deg,#808080 0,#808080 1px,transparent 1px,transparent 2px);background-position:0px 0"></div>
<div class="a" style="left:31px;top:495px;width:9px;height:9px;background:#fff;border:1px solid #989898"></div>
<div class="a" style="left:33px;top:499px;width:5px;height:1px;background:#000"></div>
<div class="a" style="left:54px;top:506px;width:1px;height:2px;background-image:repeating-linear-gradient(180deg,#808080 0,#808080 1px,transparent 1px,transparent 2px);background-position:0 0px"></div>
<svg class="a" style="left:45px;top:493px" width="17" height="15" viewBox="0 0 17 15"><path d="M0.800 3q0-2 2-2h3q1.500 0 2 1.500h4q1.500 0 1.500 1.500v8.500h-12.500z" fill="#ecbc40" stroke="#d09a28"/><path d="M7.500 4l4.500-1.500v9" fill="none" stroke="#d8a430" stroke-width="0.800"/><path d="M3 14.300l-0.800-7q0-1 1-1.300l4-1.500 8.300-0.800q1 0 0.700 1l-3.200 7.300q-0.500 1-1.500 1.200z" fill="#fdea96" stroke="#e0aa30"/><path d="M3.800 7.200l4-1.500 7-0.700" fill="none" stroke="#fff8d4"/></svg>
<div class="a bm" style="left:66px;top:493px"><i>C06 </i>建筑电气部分</div>
<div class="a" style="left:16px;top:508px;width:1px;height:18px;background-image:repeating-linear-gradient(180deg,#808080 0,#808080 1px,transparent 1px,transparent 2px);background-position:0 0px"></div>
<div class="a" style="left:35px;top:508px;width:1px;height:18px;background-image:repeating-linear-gradient(180deg,#808080 0,#808080 1px,transparent 1px,transparent 2px);background-position:0 0px"></div>
<div class="a" style="left:54px;top:508px;width:1px;height:18px;background-image:repeating-linear-gradient(180deg,#808080 0,#808080 1px,transparent 1px,transparent 2px);background-position:0 0px"></div>
<div class="a" style="left:55px;top:517px;width:9px;height:1px;background-image:repeating-linear-gradient(90deg,#808080 0,#808080 1px,transparent 1px,transparent 2px);background-position:1px 0"></div>
<svg class="a" style="left:65px;top:511px" width="14" height="14" viewBox="0 0 14 14"><rect width="14" height="14" fill="#f00"/><rect x="2" y="2" width="10" height="10" fill="#fff"/><path d="M3 3h2l6 6v1.500h-1.500z" fill="#f00"/><path d="M6.500 3h4.500v4.500l-1.500-1.500-1 1z" fill="#f00"/><path d="M2.500 10l2.500-4 3 4z" fill="#f00"/></svg>
<div class="a bm" style="left:85px;top:511px"><i>DQ0 </i>施工、技术管理资料（封面）</div>
<div class="a" style="left:16px;top:526px;width:1px;height:18px;background-image:repeating-linear-gradient(180deg,#808080 0,#808080 1px,transparent 1px,transparent 2px);background-position:0 0px"></div>
<div class="a" style="left:35px;top:526px;width:1px;height:18px;background-image:repeating-linear-gradient(180deg,#808080 0,#808080 1px,transparent 1px,transparent 2px);background-position:0 0px"></div>
<div class="a" style="left:54px;top:526px;width:1px;height:18px;background-image:repeating-linear-gradient(180deg,#808080 0,#808080 1px,transparent 1px,transparent 2px);background-position:0 0px"></div>
<div class="a" style="left:55px;top:535px;width:9px;height:1px;background-image:repeating-linear-gradient(90deg,#808080 0,#808080 1px,transparent 1px,transparent 2px);background-position:1px 0"></div>
<svg class="a" style="left:65px;top:529px" width="14" height="14" viewBox="0 0 14 14"><rect width="14" height="14" fill="#f00"/><rect x="2" y="2" width="10" height="10" fill="#fff"/><path d="M3 3h2l6 6v1.500h-1.500z" fill="#f00"/><path d="M6.500 3h4.500v4.500l-1.500-1.500-1 1z" fill="#f00"/><path d="M2.500 10l2.500-4 3 4z" fill="#f00"/></svg>
<div class="a" style="left:83px;top:527px;width:318px;height:18px;background:#a0a0a4;outline:1px dotted #404040;outline-offset:-1px"></div>
<div class="a bm" style="left:85px;top:529px;color:#fff">目录（参考）</div>
<div class="a" style="left:16px;top:544px;width:1px;height:18px;background-image:repeating-linear-gradient(180deg,#808080 0,#808080 1px,transparent 1px,transparent 2px);background-position:0 0px"></div>
<div class="a" style="left:35px;top:544px;width:1px;height:18px;background-image:repeating-linear-gradient(180deg,#808080 0,#808080 1px,transparent 1px,transparent 2px);background-position:0 0px"></div>
<div class="a" style="left:54px;top:544px;width:1px;height:18px;background-image:repeating-linear-gradient(180deg,#808080 0,#808080 1px,transparent 1px,transparent 2px);background-position:0 0px"></div>
<div class="a" style="left:55px;top:553px;width:9px;height:1px;background-image:repeating-linear-gradient(90deg,#808080 0,#808080 1px,transparent 1px,transparent 2px);background-position:1px 0"></div>
<div class="a" style="left:50px;top:549px;width:9px;height:9px;background:#fff;border:1px solid #989898"></div>
<div class="a" style="left:52px;top:553px;width:5px;height:1px;background:#000"></div>
<div class="a" style="left:54px;top:551px;width:1px;height:5px;background:#000"></div>
<svg class="a" style="left:64px;top:547px" width="16" height="13" viewBox="0 0 16 13"><defs><linearGradient id="fg" x1="0" y1="0" x2="0" y2="1"><stop offset="0" stop-color="#fff4ae"/><stop offset="0.550" stop-color="#fde27a"/><stop offset="1" stop-color="#f5bf3c"/></linearGradient></defs><path d="M0.700 2.500q0-2 2-2h3.300q1.500 0 2.200 1.500h5q2 0 2 2v6.500q0 2-2 2h-10.500q-2 0-2-2z" fill="#e6ae34" stroke="#b8821c" stroke-width="1.200"/><path d="M1.500 5.300q0-1.500 1.500-1.500h10.200q1.500 0 1.500 1.500v5.200q0 1.500-1.500 1.500h-10.200q-1.500 0-1.500-1.500z" fill="url(#fg)"/><path d="M1 11.800q1 1 2.500 1h10q2 0 2-2v-6" fill="none" stroke="#a8741a" stroke-width="1.100"/></svg>
<div class="a bm" style="left:85px;top:547px"><i>DQ1 </i>管理资料</div>
<div class="a" style="left:16px;top:562px;width:1px;height:18px;background-image:repeating-linear-gradient(180deg,#808080 0,#808080 1px,transparent 1px,transparent 2px);background-position:0 0px"></div>
<div class="a" style="left:35px;top:562px;width:1px;height:18px;background-image:repeating-linear-gradient(180deg,#808080 0,#808080 1px,transparent 1px,transparent 2px);background-position:0 0px"></div>
<div class="a" style="left:54px;top:562px;width:1px;height:18px;background-image:repeating-linear-gradient(180deg,#808080 0,#808080 1px,transparent 1px,transparent 2px);background-position:0 0px"></div>
<div class="a" style="left:55px;top:571px;width:9px;height:1px;background-image:repeating-linear-gradient(90deg,#808080 0,#808080 1px,transparent 1px,transparent 2px);background-position:1px 0"></div>
<div class="a" style="left:50px;top:567px;width:9px;height:9px;background:#fff;border:1px solid #989898"></div>
<div class="a" style="left:52px;top:571px;width:5px;height:1px;background:#000"></div>
<div class="a" style="left:54px;top:569px;width:1px;height:5px;background:#000"></div>
<svg class="a" style="left:64px;top:565px" width="16" height="13" viewBox="0 0 16 13"><defs><linearGradient id="fg" x1="0" y1="0" x2="0" y2="1"><stop offset="0" stop-color="#fff4ae"/><stop offset="0.550" stop-color="#fde27a"/><stop offset="1" stop-color="#f5bf3c"/></linearGradient></defs><path d="M0.700 2.500q0-2 2-2h3.300q1.500 0 2.200 1.500h5q2 0 2 2v6.500q0 2-2 2h-10.500q-2 0-2-2z" fill="#e6ae34" stroke="#b8821c" stroke-width="1.200"/><path d="M1.500 5.300q0-1.500 1.500-1.500h10.200q1.500 0 1.500 1.500v5.200q0 1.500-1.500 1.500h-10.200q-1.500 0-1.500-1.500z" fill="url(#fg)"/><path d="M1 11.800q1 1 2.500 1h10q2 0 2-2v-6" fill="none" stroke="#a8741a" stroke-width="1.100"/></svg>
<div class="a bm" style="left:85px;top:565px"><i>DQ2 </i>质量控制资料</div>
<div class="a" style="left:16px;top:580px;width:1px;height:18px;background-image:repeating-linear-gradient(180deg,#808080 0,#808080 1px,transparent 1px,transparent 2px);background-position:0 0px"></div>
<div class="a" style="left:35px;top:580px;width:1px;height:18px;background-image:repeating-linear-gradient(180deg,#808080 0,#808080 1px,transparent 1px,transparent 2px);background-position:0 0px"></div>
<div class="a" style="left:54px;top:580px;width:1px;height:18px;background-image:repeating-linear-gradient(180deg,#808080 0,#808080 1px,transparent 1px,transparent 2px);background-position:0 0px"></div>
<div class="a" style="left:55px;top:589px;width:9px;height:1px;background-image:repeating-linear-gradient(90deg,#808080 0,#808080 1px,transparent 1px,transparent 2px);background-position:1px 0"></div>
<div class="a" style="left:50px;top:585px;width:9px;height:9px;background:#fff;border:1px solid #989898"></div>
<div class="a" style="left:52px;top:589px;width:5px;height:1px;background:#000"></div>
<div class="a" style="left:54px;top:587px;width:1px;height:5px;background:#000"></div>
<svg class="a" style="left:64px;top:583px" width="16" height="13" viewBox="0 0 16 13"><defs><linearGradient id="fg" x1="0" y1="0" x2="0" y2="1"><stop offset="0" stop-color="#fff4ae"/><stop offset="0.550" stop-color="#fde27a"/><stop offset="1" stop-color="#f5bf3c"/></linearGradient></defs><path d="M0.700 2.500q0-2 2-2h3.300q1.500 0 2.200 1.500h5q2 0 2 2v6.500q0 2-2 2h-10.500q-2 0-2-2z" fill="#e6ae34" stroke="#b8821c" stroke-width="1.200"/><path d="M1.500 5.300q0-1.500 1.500-1.500h10.200q1.500 0 1.500 1.500v5.200q0 1.500-1.500 1.500h-10.200q-1.500 0-1.500-1.500z" fill="url(#fg)"/><path d="M1 11.800q1 1 2.500 1h10q2 0 2-2v-6" fill="none" stroke="#a8741a" stroke-width="1.100"/></svg>
<div class="a bm" style="left:85px;top:583px"><i>DQ3 </i>安全和功能检验资料</div>
<div class="a" style="left:16px;top:598px;width:1px;height:18px;background-image:repeating-linear-gradient(180deg,#808080 0,#808080 1px,transparent 1px,transparent 2px);background-position:0 0px"></div>
<div class="a" style="left:35px;top:598px;width:1px;height:18px;background-image:repeating-linear-gradient(180deg,#808080 0,#808080 1px,transparent 1px,transparent 2px);background-position:0 0px"></div>
<div class="a" style="left:54px;top:598px;width:1px;height:18px;background-image:repeating-linear-gradient(180deg,#808080 0,#808080 1px,transparent 1px,transparent 2px);background-position:0 0px"></div>
<div class="a" style="left:55px;top:607px;width:9px;height:1px;background-image:repeating-linear-gradient(90deg,#808080 0,#808080 1px,transparent 1px,transparent 2px);background-position:1px 0"></div>
<div class="a" style="left:50px;top:603px;width:9px;height:9px;background:#fff;border:1px solid #989898"></div>
<div class="a" style="left:52px;top:607px;width:5px;height:1px;background:#000"></div>
<div class="a" style="left:73px;top:614px;width:1px;height:2px;background-image:repeating-linear-gradient(180deg,#808080 0,#808080 1px,transparent 1px,transparent 2px);background-position:0 0px"></div>
<svg class="a" style="left:64px;top:601px" width="17" height="15" viewBox="0 0 17 15"><path d="M0.800 3q0-2 2-2h3q1.500 0 2 1.500h4q1.500 0 1.500 1.500v8.500h-12.500z" fill="#ecbc40" stroke="#d09a28"/><path d="M7.500 4l4.500-1.500v9" fill="none" stroke="#d8a430" stroke-width="0.800"/><path d="M3 14.300l-0.800-7q0-1 1-1.300l4-1.500 8.300-0.800q1 0 0.700 1l-3.200 7.300q-0.500 1-1.500 1.200z" fill="#fdea96" stroke="#e0aa30"/><path d="M3.800 7.200l4-1.500 7-0.700" fill="none" stroke="#fff8d4"/></svg>
<div class="a bm" style="left:85px;top:601px">（现行）<i>DQ4 </i>建筑电气分部工程质量验收记录（<i>GB50303-20</i></div>
<div class="a" style="left:16px;top:616px;width:1px;height:18px;background-image:repeating-linear-gradient(180deg,#808080 0,#808080 1px,transparent 1px,transparent 2px);background-position:0 0px"></div>
<div class="a" style="left:35px;top:616px;width:1px;height:18px;background-image:repeating-linear-gradient(180deg,#808080 0,#808080 1px,transparent 1px,transparent 2px);background-position:0 0px"></div>
<div class="a" style="left:54px;top:616px;width:1px;height:18px;background-image:repeating-linear-gradient(180deg,#808080 0,#808080 1px,transparent 1px,transparent 2px);background-position:0 0px"></div>
<div class="a" style="left:73px;top:616px;width:1px;height:18px;background-image:repeating-linear-gradient(180deg,#808080 0,#808080 1px,transparent 1px,transparent 2px);background-position:0 0px"></div>
<div class="a" style="left:74px;top:625px;width:9px;height:1px;background-image:repeating-linear-gradient(90deg,#808080 0,#808080 1px,transparent 1px,transparent 2px);background-position:0px 0"></div>
<div class="a" style="left:69px;top:621px;width:9px;height:9px;background:#fff;border:1px solid #989898"></div>
<div class="a" style="left:71px;top:625px;width:5px;height:1px;background:#000"></div>
<div class="a" style="left:73px;top:623px;width:1px;height:5px;background:#000"></div>
<svg class="a" style="left:83px;top:619px" width="16" height="13" viewBox="0 0 16 13"><defs><linearGradient id="fg" x1="0" y1="0" x2="0" y2="1"><stop offset="0" stop-color="#fff4ae"/><stop offset="0.550" stop-color="#fde27a"/><stop offset="1" stop-color="#f5bf3c"/></linearGradient></defs><path d="M0.700 2.500q0-2 2-2h3.300q1.500 0 2.200 1.500h5q2 0 2 2v6.500q0 2-2 2h-10.500q-2 0-2-2z" fill="#e6ae34" stroke="#b8821c" stroke-width="1.200"/><path d="M1.500 5.300q0-1.500 1.500-1.500h10.200q1.500 0 1.500 1.500v5.200q0 1.500-1.500 1.500h-10.200q-1.500 0-1.500-1.500z" fill="url(#fg)"/><path d="M1 11.800q1 1 2.500 1h10q2 0 2-2v-6" fill="none" stroke="#a8741a" stroke-width="1.100"/></svg>
<div class="a bm" style="left:104px;top:619px"><i>DQ4.1 </i>室外电气安装子分部工程质量验收记录</div>
<div class="a" style="left:16px;top:634px;width:1px;height:18px;background-image:repeating-linear-gradient(180deg,#808080 0,#808080 1px,transparent 1px,transparent 2px);background-position:0 0px"></div>
<div class="a" style="left:35px;top:634px;width:1px;height:18px;background-image:repeating-linear-gradient(180deg,#808080 0,#808080 1px,transparent 1px,transparent 2px);background-position:0 0px"></div>
<div class="a" style="left:54px;top:634px;width:1px;height:18px;background-image:repeating-linear-gradient(180deg,#808080 0,#808080 1px,transparent 1px,transparent 2px);background-position:0 0px"></div>
<div class="a" style="left:73px;top:634px;width:1px;height:18px;background-image:repeating-linear-gradient(180deg,#808080 0,#808080 1px,transparent 1px,transparent 2px);background-position:0 0px"></div>
<div class="a" style="left:74px;top:643px;width:9px;height:1px;background-image:repeating-linear-gradient(90deg,#808080 0,#808080 1px,transparent 1px,transparent 2px);background-position:0px 0"></div>
<div class="a" style="left:69px;top:639px;width:9px;height:9px;background:#fff;border:1px solid #989898"></div>
<div class="a" style="left:71px;top:643px;width:5px;height:1px;background:#000"></div>
<div class="a" style="left:73px;top:641px;width:1px;height:5px;background:#000"></div>
<svg class="a" style="left:83px;top:637px" width="16" height="13" viewBox="0 0 16 13"><defs><linearGradient id="fg" x1="0" y1="0" x2="0" y2="1"><stop offset="0" stop-color="#fff4ae"/><stop offset="0.550" stop-color="#fde27a"/><stop offset="1" stop-color="#f5bf3c"/></linearGradient></defs><path d="M0.700 2.500q0-2 2-2h3.300q1.500 0 2.200 1.500h5q2 0 2 2v6.500q0 2-2 2h-10.500q-2 0-2-2z" fill="#e6ae34" stroke="#b8821c" stroke-width="1.200"/><path d="M1.500 5.300q0-1.500 1.500-1.500h10.200q1.500 0 1.500 1.500v5.200q0 1.500-1.500 1.500h-10.200q-1.500 0-1.500-1.500z" fill="url(#fg)"/><path d="M1 11.800q1 1 2.500 1h10q2 0 2-2v-6" fill="none" stroke="#a8741a" stroke-width="1.100"/></svg>
<div class="a bm" style="left:104px;top:637px"><i>DQ4.2 </i>变配电室安装子分部工程质量验收记录</div>
<div class="a" style="left:16px;top:652px;width:1px;height:18px;background-image:repeating-linear-gradient(180deg,#808080 0,#808080 1px,transparent 1px,transparent 2px);background-position:0 0px"></div>
<div class="a" style="left:35px;top:652px;width:1px;height:18px;background-image:repeating-linear-gradient(180deg,#808080 0,#808080 1px,transparent 1px,transparent 2px);background-position:0 0px"></div>
<div class="a" style="left:54px;top:652px;width:1px;height:18px;background-image:repeating-linear-gradient(180deg,#808080 0,#808080 1px,transparent 1px,transparent 2px);background-position:0 0px"></div>
<div class="a" style="left:73px;top:652px;width:1px;height:18px;background-image:repeating-linear-gradient(180deg,#808080 0,#808080 1px,transparent 1px,transparent 2px);background-position:0 0px"></div>
<div class="a" style="left:74px;top:661px;width:9px;height:1px;background-image:repeating-linear-gradient(90deg,#808080 0,#808080 1px,transparent 1px,transparent 2px);background-position:0px 0"></div>
<div class="a" style="left:69px;top:657px;width:9px;height:9px;background:#fff;border:1px solid #989898"></div>
<div class="a" style="left:71px;top:661px;width:5px;height:1px;background:#000"></div>
<div class="a" style="left:73px;top:659px;width:1px;height:5px;background:#000"></div>
<svg class="a" style="left:83px;top:655px" width="16" height="13" viewBox="0 0 16 13"><defs><linearGradient id="fg" x1="0" y1="0" x2="0" y2="1"><stop offset="0" stop-color="#fff4ae"/><stop offset="0.550" stop-color="#fde27a"/><stop offset="1" stop-color="#f5bf3c"/></linearGradient></defs><path d="M0.700 2.500q0-2 2-2h3.300q1.500 0 2.200 1.500h5q2 0 2 2v6.500q0 2-2 2h-10.500q-2 0-2-2z" fill="#e6ae34" stroke="#b8821c" stroke-width="1.200"/><path d="M1.500 5.300q0-1.500 1.500-1.500h10.200q1.500 0 1.500 1.500v5.200q0 1.500-1.500 1.500h-10.200q-1.500 0-1.500-1.500z" fill="url(#fg)"/><path d="M1 11.800q1 1 2.500 1h10q2 0 2-2v-6" fill="none" stroke="#a8741a" stroke-width="1.100"/></svg>
<div class="a bm" style="left:104px;top:655px"><i>DQ4.3 </i>供电干线安装子分部工程质量验收记录</div>
<div class="a" style="left:16px;top:670px;width:1px;height:18px;background-image:repeating-linear-gradient(180deg,#808080 0,#808080 1px,transparent 1px,transparent 2px);background-position:0 0px"></div>
<div class="a" style="left:35px;top:670px;width:1px;height:18px;background-image:repeating-linear-gradient(180deg,#808080 0,#808080 1px,transparent 1px,transparent 2px);background-position:0 0px"></div>
<div class="a" style="left:54px;top:670px;width:1px;height:18px;background-image:repeating-linear-gradient(180deg,#808080 0,#808080 1px,transparent 1px,transparent 2px);background-position:0 0px"></div>
<div class="a" style="left:73px;top:670px;width:1px;height:18px;background-image:repeating-linear-gradient(180deg,#808080 0,#808080 1px,transparent 1px,transparent 2px);background-position:0 0px"></div>
<div class="a" style="left:74px;top:679px;width:9px;height:1px;background-image:repeating-linear-gradient(90deg,#808080 0,#808080 1px,transparent 1px,transparent 2px);background-position:0px 0"></div>
<div class="a" style="left:69px;top:675px;width:9px;height:9px;background:#fff;border:1px solid #989898"></div>
<div class="a" style="left:71px;top:679px;width:5px;height:1px;background:#000"></div>
<div class="a" style="left:92px;top:686px;width:1px;height:2px;background-image:repeating-linear-gradient(180deg,#808080 0,#808080 1px,transparent 1px,transparent 2px);background-position:0 0px"></div>
<svg class="a" style="left:83px;top:673px" width="17" height="15" viewBox="0 0 17 15"><path d="M0.800 3q0-2 2-2h3q1.500 0 2 1.500h4q1.500 0 1.500 1.500v8.500h-12.500z" fill="#ecbc40" stroke="#d09a28"/><path d="M7.500 4l4.500-1.500v9" fill="none" stroke="#d8a430" stroke-width="0.800"/><path d="M3 14.300l-0.800-7q0-1 1-1.300l4-1.500 8.300-0.800q1 0 0.700 1l-3.200 7.300q-0.500 1-1.500 1.200z" fill="#fdea96" stroke="#e0aa30"/><path d="M3.800 7.200l4-1.500 7-0.700" fill="none" stroke="#fff8d4"/></svg>
<div class="a bm" style="left:104px;top:673px"><i>DQ4.4 </i>电气动力安装子分部工程质量验收记录</div>
<div class="a" style="left:16px;top:688px;width:1px;height:18px;background-image:repeating-linear-gradient(180deg,#808080 0,#808080 1px,transparent 1px,transparent 2px);background-position:0 0px"></div>
<div class="a" style="left:35px;top:688px;width:1px;height:18px;background-image:repeating-linear-gradient(180deg,#808080 0,#808080 1px,transparent 1px,transparent 2px);background-position:0 0px"></div>
<div class="a" style="left:54px;top:688px;width:1px;height:18px;background-image:repeating-linear-gradient(180deg,#808080 0,#808080 1px,transparent 1px,transparent 2px);background-position:0 0px"></div>
<div class="a" style="left:73px;top:688px;width:1px;height:18px;background-image:repeating-linear-gradient(180deg,#808080 0,#808080 1px,transparent 1px,transparent 2px);background-position:0 0px"></div>
<div class="a" style="left:92px;top:688px;width:1px;height:18px;background-image:repeating-linear-gradient(180deg,#808080 0,#808080 1px,transparent 1px,transparent 2px);background-position:0 0px"></div>
<div class="a" style="left:93px;top:697px;width:9px;height:1px;background-image:repeating-linear-gradient(90deg,#808080 0,#808080 1px,transparent 1px,transparent 2px);background-position:1px 0"></div>
<div class="a" style="left:88px;top:693px;width:9px;height:9px;background:#fff;border:1px solid #989898"></div>
<div class="a" style="left:90px;top:697px;width:5px;height:1px;background:#000"></div>
<div class="a" style="left:111px;top:704px;width:1px;height:2px;background-image:repeating-linear-gradient(180deg,#808080 0,#808080 1px,transparent 1px,transparent 2px);background-position:0 0px"></div>
<svg class="a" style="left:102px;top:691px" width="17" height="15" viewBox="0 0 17 15"><path d="M0.800 3q0-2 2-2h3q1.500 0 2 1.500h4q1.500 0 1.500 1.500v8.500h-12.500z" fill="#ecbc40" stroke="#d09a28"/><path d="M7.500 4l4.500-1.500v9" fill="none" stroke="#d8a430" stroke-width="0.800"/><path d="M3 14.300l-0.800-7q0-1 1-1.300l4-1.500 8.300-0.800q1 0 0.700 1l-3.200 7.300q-0.500 1-1.500 1.200z" fill="#fdea96" stroke="#e0aa30"/><path d="M3.800 7.200l4-1.500 7-0.700" fill="none" stroke="#fff8d4"/></svg>
<div class="a bm" style="left:123px;top:691px"><i>DQ4.4.1 </i>成套配电柜、控制柜（台、箱）和配电箱（</div>
</div></div>
<div class="a" style="left:37px;top:396px;width:158px;height:25px;border:3px solid #f00"></div>
<div class="a" style="left:36px;top:525px;width:136px;height:21px;border:3px solid #f00"></div>
<div class="a" style="left:401px;top:202px;width:16px;height:497px;background-color:#fff;background-image:conic-gradient(#f0f0f0 25%,#fff 0 50%,#f0f0f0 0 75%,#fff 0);background-size:2px 2px"></div>
<div class="a" style="left:401px;top:203px;width:16px;height:17px;background:#f0f0f0;border-bottom:1px solid #a0a0a0"></div>
<svg class="a" style="left:405px;top:210px" width="7" height="4" viewBox="0 0 7 4"><path d="M0 4h7L3.500 0z" fill="#000"/></svg>
<div class="a" style="left:401px;top:221px;width:16px;height:220px;background:#f0f0f0;border-right:1px solid #a0a0a0;border-bottom:1px solid #a0a0a0;border-left:1px solid #fff"></div>
<div class="a" style="left:401px;top:683px;width:16px;height:16px;background:#f0f0f0;border-right:1px solid #a0a0a0;border-bottom:1px solid #a0a0a0;border-top:1px solid #fff"></div>
<svg class="a" style="left:405px;top:689px" width="7" height="4" viewBox="0 0 7 4"><path d="M0 0h7L3.500 4z" fill="#000"/></svg>
<div class="a" style="left:133px;top:700px;width:160px;height:8px;border:1px solid #a8a8a8;border-radius:3px;background:linear-gradient(#fff 0,#e8f4e0 30%,#8ed06a 100%)"></div>
<svg class="a" style="left:209px;top:702px" width="9" height="5" viewBox="0 0 9 5"><path d="M0.500 0.500l4 3.500 4-3.500" fill="none" stroke="#1010e0" stroke-width="1.300"/></svg>
<div class="a" style="left:6px;top:708px;width:412px;height:100px;background:#fff;border:1px solid #8e9aa8"></div>
<div class="a" style="left:8px;top:715px;width:408px;height:9px;background:linear-gradient(#f4f4f6,#ececf0)"></div>
<div class="a bm" style="left:175px;top:712px">范</div><div class="a bm" style="left:235px;top:712px">例</div>
<div class="a" style="left:428px;top:343px;width:8px;height:281px;border:1px solid #a0a8b0;border-radius:3px;background:linear-gradient(90deg,#fff 0,#dce8f0 40%,#9cb8cc 100%)"></div>
<svg class="a" style="left:430px;top:479px" width="5" height="9" viewBox="0 0 5 9"><path d="M4 0.500L0.800 4.500 4 8.500" fill="none" stroke="#000" stroke-width="1.300"/></svg>
<div class="a" style="left:436px;top:123px;width:790px;height:680px;border:1px solid #a0a0a0;background:#fff"></div>
<div class="a" style="left:440px;top:128px;width:790px;height:680px;border:1px solid #a0a0a0;background:#f0f0f0"></div>
<div class="a" style="left:441px;top:129px;width:790px;height:1px;background:#fff"></div>
<div class="a" style="left:441px;top:129px;width:1px;height:75px;background:#fff"></div>
<div class="a" style="left:441px;top:152px;width:781px;height:1px;background:#a0a0a0"></div><div class="a" style="left:441px;top:153px;width:781px;height:1px;background:#fff"></div>
<div class="a" style="left:441px;top:176px;width:781px;height:1px;background:#a0a0a0"></div><div class="a" style="left:441px;top:177px;width:781px;height:1px;background:#fff"></div>
<div class="a" style="left:441px;top:178px;width:781px;height:1px;background:#d8d8d8"></div>
<div class="a" style="left:441px;top:202px;width:781px;height:1px;background:#a0a0a0"></div><div class="a" style="left:441px;top:203px;width:781px;height:1px;background:#fff"></div>
<div class="a" style="left:445px;top:132px;width:1px;height:17px;background:#fff"></div><div class="a" style="left:446px;top:132px;width:1px;height:17px;background:#a0a0a0"></div><div class="a" style="left:444px;top:149px;width:3px;height:1px;background:#a0a0a0"></div>
<div class="a" style="left:445px;top:156px;width:1px;height:17px;background:#fff"></div><div class="a" style="left:446px;top:156px;width:1px;height:17px;background:#a0a0a0"></div><div class="a" style="left:444px;top:173px;width:3px;height:1px;background:#a0a0a0"></div>
<div class="a" style="left:445px;top:181px;width:1px;height:18px;background:#fff"></div><div class="a" style="left:446px;top:181px;width:1px;height:18px;background:#a0a0a0"></div><div class="a" style="left:444px;top:199px;width:3px;height:1px;background:#a0a0a0"></div>
<svg class="a" style="left:457px;top:134px" width="16" height="13" viewBox="0 0 16 13" shape-rendering="crispEdges"><path d="M0.500 0.500h5l2 2v6h-7z" fill="#f0f0f0" stroke="#a4a4a4"/><path d="M2 3h3M2 5h4M2 7h4" stroke="#a4a4a4"/><path d="M6.500 3.500h6l3 3v6h-9z" fill="#f0f0f0" stroke="#a4a4a4"/><path d="M8 7h4M8 9h6M8 11h6" stroke="#a4a4a4"/></svg>
<svg class="a" style="left:485px;top:134px" width="11" height="15" viewBox="0 0 11 15"><path d="M3 0l4 9M8 0L4 9" stroke="#a4a4a4" stroke-width="1.300" fill="none"/><circle cx="2.500" cy="11.500" r="2" fill="none" stroke="#a4a4a4" stroke-width="1.200"/><circle cx="8.500" cy="11.500" r="2" fill="none" stroke="#a4a4a4" stroke-width="1.200"/></svg>
<svg class="a" style="left:507px;top:134px" width="17" height="15" viewBox="0 0 17 15"><path d="M1 3q0-1.500 1.500-1.500h2.500q0-1.500 1.500-1.500h2q1.500 0 1.500 1.500h2.500q1.500 0 1.500 1.500v10h-13z" fill="#a4a4a4"/><path d="M7.500 7.500h8v7h-8z" fill="#f0f0f0" stroke="#a4a4a4"/><path d="M9 10h5M9 12h5" stroke="#a4a4a4"/></svg>
<svg class="a" style="left:539px;top:138px" width="12" height="9" viewBox="0 0 12 9"><path d="M1 1v5h5" fill="none" stroke="#a4a4a4" stroke-width="1.400"/><path d="M1.500 5.500q3-5 7-4t2 6" fill="none" stroke="#a4a4a4" stroke-width="1.400"/></svg>
<svg class="a" style="left:565px;top:138px" width="12" height="9" viewBox="0 0 12 9"><path d="M11 1v5h-5" fill="none" stroke="#a4a4a4" stroke-width="1.400"/><path d="M10.500 5.500q-3-5-7-4t-2 6" fill="none" stroke="#a4a4a4" stroke-width="1.400"/></svg>
<div class="vs" style="left:530px;top:133px;height:17px"></div>
<div class="vs" style="left:901px;top:133px;height:17px"></div>
<div class="vs" style="left:958px;top:133px;height:17px"></div>
<div class="vs" style="left:992px;top:133px;height:17px"></div>
<div class="vs" style="left:1026px;top:133px;height:17px"></div>
<div class="vs" style="left:1163px;top:133px;height:17px"></div>
<div class="vs" style="left:585px;top:132px;height:18px"></div>
<div class="a" style="left:588px;top:132px;width:91px;height:18px;border:1px solid #a0a0a0;box-shadow:inset -1px -1px 0 #fff"></div>
<div class="a" style="left:592px;top:133px;font:bold 14px/16px 'Liberation Serif',serif;letter-spacing:-3px">T<span style="font-size:11px">T</span></div>
<div class="a bm" style="left:608px;top:134px;color:#a4a4a4">宋体</div>
<svg class="a" style="left:665px;top:139px" width="8" height="4" viewBox="0 0 8 4"><path d="M0 0h8L4 4z" fill="#a4a4a4"/></svg>
<div class="vs" style="left:680px;top:132px;height:18px"></div>
<div class="a" style="left:684px;top:132px;width:59px;height:18px;border:1px solid #a0a0a0;box-shadow:inset -1px -1px 0 #fff"></div>
<div class="a ui" style="left:687px;top:134px;color:#8c8c8c;font-size:11px">10</div>
<svg class="a" style="left:729px;top:139px" width="8" height="4" viewBox="0 0 8 4"><path d="M0 0h8L4 4z" fill="#a4a4a4"/></svg>
<svg class="a" style="left:749px;top:133px" width="17" height="16" viewBox="0 0 17 16"><path d="M7 1h7q2 0 2 2v5l-5 4-3 1-5 2.500 1-3.500-4-1.500 4-5.500z" fill="#a4a4a4"/><path d="M9 12l3-3" stroke="#f0f0f0"/></svg>
<div class="a" style="left:779px;top:133px;font:bold 14px/16px 'Liberation Serif',serif;color:#a4a4a4">B</div>
<svg class="a" style="left:802px;top:136px" width="14" height="10" viewBox="0 0 14 10"><path d="M9 0h5l-9 10h-5z" fill="#a4a4a4"/></svg>
<div class="a" style="left:829px;top:133px;font:bold 14px/15px 'Liberation Serif',serif;color:#a4a4a4;text-decoration:underline">U</div>
<svg class="a" style="left:854px;top:133px" width="15" height="16" viewBox="0 0 15 16"><path d="M5 1l7 6-5 5-6-5z" fill="#f0f0f0" stroke="#a4a4a4" stroke-width="1.400"/><path d="M4 0v5" stroke="#a4a4a4"/><path d="M12 7q2 3 1 5-2-1-1-5z" fill="#a4a4a4"/><path d="M0 14.500h13" stroke="#a4a4a4" stroke-width="1.600"/></svg>
<div class="a" style="left:883px;top:132px;font:13px/15px 'Liberation Serif',serif;color:#a4a4a4">A</div><div class="a" style="left:882px;top:146px;width:11px;height:2px;background:#a4a4a4"></div>
<div class="a" style="left:911px;top:140px;width:11px;height:2px;background:#a4a4a4"></div><div class="a" style="left:915px;top:135px;width:2px;height:11px;background:#a4a4a4"></div>
<div class="a" style="left:937px;top:140px;width:11px;height:2px;background:#a4a4a4"></div>
<div class="a" style="left:968px;top:132px;font:italic bold 15px/16px 'Liberation Serif',serif;color:#a4a4a4">b<span style="font-size:10px;vertical-align:5px;font-style:normal">2</span></div>
<svg class="a" style="left:1002px;top:133px" width="17" height="17" viewBox="0 0 17 17"><path d="M5.500 0.800h6l4.700 4.700v6l-4.700 4.700h-6l-4.700-4.700v-6z" fill="none" stroke="#a4a4a4"/><circle cx="8.500" cy="8.500" r="6.200" fill="none" stroke="#a4a4a4"/></svg>
<div class="a ui" style="left:1004px;top:135px;font-size:9px;line-height:12px;color:#a4a4a4;letter-spacing:-0.5px">1/a</div>
<div class="a" style="left:1032px;top:132px;width:22px;height:18px;background-color:#fff;background-image:conic-gradient(#f0f0f0 25%,#fff 0 50%,#f0f0f0 0 75%,#fff 0);background-size:2px 2px"></div>
<div class="a" style="left:1058px;top:132px;width:22px;height:18px;background-color:#fff;background-image:conic-gradient(#f0f0f0 25%,#fff 0 50%,#f0f0f0 0 75%,#fff 0);background-size:2px 2px"></div>
<div class="a" style="left:1196px;top:132px;width:22px;height:18px;background-color:#fff;background-image:conic-gradient(#f0f0f0 25%,#fff 0 50%,#f0f0f0 0 75%,#fff 0);background-size:2px 2px"></div>
<svg class="a" style="left:1037px;top:135px" width="14" height="12" viewBox="0 0 14 12" shape-rendering="crispEdges"><path d="M0.500 0.500h13v11h-13z" fill="none" stroke="#a4a4a4"/><path d="M2 3.500h10M2 6.500h6M2 9.500h4M8 8v3M6.500 9.500h3" stroke="#a4a4a4"/></svg>
<svg class="a" style="left:1063px;top:135px" width="13" height="12" viewBox="0 0 13 12" shape-rendering="crispEdges"><path d="M0 0.500h13M0 3.500h9M0 6.500h13M0 9.500h9M0 11.500h13" stroke="#a4a4a4"/></svg>
<svg class="a" style="left:1088px;top:135px" width="13" height="12" viewBox="0 0 13 12" shape-rendering="crispEdges"><path d="M0 0.500h13M3 3.500h7M0 6.500h13M3 9.500h7M1 11.500h11" stroke="#a4a4a4"/></svg>
<svg class="a" style="left:1114px;top:135px" width="13" height="12" viewBox="0 0 13 12" shape-rendering="crispEdges"><path d="M0 0.500h13M4 3.500h9M0 6.500h13M4 9.500h9M0 11.500h13" stroke="#a4a4a4"/></svg>
<svg class="a" style="left:1140px;top:135px" width="13" height="12" viewBox="0 0 13 12" shape-rendering="crispEdges"><path d="M0 0.500h13M0 3.500h5M8 3.500h5M0 6.500h13M0 9.500h5M8 9.500h5M0 11.500h13" stroke="#a4a4a4"/></svg>
<svg class="a" style="left:1175px;top:134px" width="14" height="14" viewBox="0 0 14 14" shape-rendering="crispEdges"><path d="M1.500 1v13M5.500 1v13M9.500 1v13M13.500 1v13M3.500 1v10M7.500 1v10M11.500 1v10" stroke="#fff"/><path d="M0.500 0v13M4.500 0v13M8.500 0v13M12.500 0v13M2.500 0v10M6.500 0v10M10.500 0v10" stroke="#a4a4a4"/></svg>
<svg class="a" style="left:1202px;top:135px" width="14" height="14" viewBox="0 0 14 14" shape-rendering="crispEdges"><path d="M0.500 0v13M4.500 0v13M8.500 0v13M12.500 0v13M2.500 3v7M6.500 3v7M10.500 3v7" stroke="#a4a4a4"/></svg>
<svg class="a" style="left:454px;top:158px" width="16" height="15" viewBox="0 0 16 15" shape-rendering="crispEdges"><rect x="0.500" y="0.500" width="6" height="4" fill="#a4a4a4"/><rect x="0.500" y="9.500" width="6" height="4" fill="#a4a4a4"/><path d="M2 2.500h3M2 11.500h3" stroke="#f0f0f0"/><path d="M8 7.500h7M10 5.500l-2 2 2 2M12 5.500h3M12 9.500h3" stroke="#a4a4a4" fill="none"/><rect x="15" y="14" width="1" height="1" fill="#a4a4a4"/></svg>
<svg class="a" style="left:479px;top:158px" width="16" height="15" viewBox="0 0 16 15" shape-rendering="crispEdges"><path d="M0.500 0.500h14v7h-14zM4.500 0v8M9.500 0v8M0 3.500h15" fill="none" stroke="#a4a4a4"/><path d="M5 5h9v3h-9z" fill="#a4a4a4"/><path d="M6.500 8v5M9.500 8v5M12.500 8v4" stroke="#a4a4a4"/><rect x="15" y="14" width="1" height="1" fill="#a4a4a4"/></svg>
<svg class="a" style="left:505px;top:158px" width="16" height="15" viewBox="0 0 16 15" shape-rendering="crispEdges"><rect width="16" height="15" rx="1" fill="#a4a4a4"/><path d="M2 4.500h8M2 7.500h3M6 7.500h3M10 7.500h2M2 10.500h3" stroke="#e8e8e8"/></svg>
<svg class="a" style="left:531px;top:158px" width="16" height="15" viewBox="0 0 16 15" shape-rendering="crispEdges"><rect x="0.500" y="0.500" width="3" height="3" fill="none" stroke="#a4a4a4"/><rect x="10.500" y="0.500" width="3" height="3" fill="none" stroke="#a4a4a4"/><path d="M7 2v11M4.500 6.500l2.500-2.500 2.500 2.500M4.500 8.500h5M4.500 8v5M9.500 8v5" fill="none" stroke="#a4a4a4"/><rect x="15" y="14" width="1" height="1" fill="#a4a4a4"/></svg>
<svg class="a" style="left:555px;top:158px" width="16" height="15" viewBox="0 0 16 15" shape-rendering="crispEdges"><path d="M0.500 0.500h8v12h-8zM4.500 0v13M0 4.500h9M0 8.500h9" fill="none" stroke="#a4a4a4"/><path d="M10 4.500h6M10 7.500h6M10 10.500h4" stroke="#a4a4a4"/><rect x="15" y="14" width="1" height="1" fill="#a4a4a4"/></svg>
<svg class="a" style="left:581px;top:158px" width="14" height="15" viewBox="0 0 14 15" shape-rendering="crispEdges"><rect x="0.500" y="0.500" width="3" height="3" fill="none" stroke="#a4a4a4"/><rect x="9.500" y="0.500" width="3" height="3" fill="none" stroke="#a4a4a4"/><path d="M2 4v3l4.500 3 4.500-3v-3M6.500 6v8M4 11.500l2.500 2.500 2.500-2.500" fill="none" stroke="#a4a4a4"/></svg>
<svg class="a" style="left:606px;top:158px" width="16" height="15" viewBox="0 0 16 15" shape-rendering="crispEdges"><rect x="0.500" y="0.500" width="12" height="5" fill="#d8d8d8" stroke="#a4a4a4"/><rect x="0.500" y="8.500" width="12" height="5" fill="#d8d8d8" stroke="#a4a4a4"/><path d="M14.500 3v9h-2M14 10l-2 2 2 2" fill="none" stroke="#a4a4a4"/><rect x="15" y="14" width="1" height="1" fill="#a4a4a4"/></svg>
<svg class="a" style="left:631px;top:158px" width="16" height="15" viewBox="0 0 16 15" shape-rendering="crispEdges"><rect x="0.500" y="0.500" width="12" height="5" fill="#d8d8d8" stroke="#a4a4a4"/><rect x="0.500" y="8.500" width="12" height="5" fill="#d8d8d8" stroke="#a4a4a4"/><path d="M14.500 3v9h-2M14 10l-2 2 2 2" fill="none" stroke="#a4a4a4"/><rect x="15" y="14" width="1" height="1" fill="#a4a4a4"/></svg>
<div class="a" style="left:653px;top:156px;width:21px;height:18px;background-color:#fff;background-image:conic-gradient(#f0f0f0 25%,#fff 0 50%,#f0f0f0 0 75%,#fff 0);background-size:2px 2px"></div>
<svg class="a" style="left:657px;top:158px" width="13" height="15" viewBox="0 0 13 15"><path d="M3.500 7v-3q0-3 3-3t3 3v3" fill="none" stroke="#a4a4a4" stroke-width="1.600"/><rect x="0.500" y="6.500" width="12" height="8" fill="#d0d0d0" stroke="#a4a4a4"/><path d="M6.500 9v3" stroke="#a4a4a4" stroke-width="2"/></svg>
<div class="vs" style="left:677px;top:157px;height:17px"></div>
<div class="vs" style="left:756px;top:157px;height:17px"></div>
<div class="vs" style="left:801px;top:157px;height:17px"></div>
<svg class="a" style="left:684px;top:158px" width="15" height="15" viewBox="0 0 15 15" shape-rendering="crispEdges"><path d="M3.500 1v13M1 3.500l2.500-2.500 2.500 2.500M1 11.500l2.500 2.500 2.500-2.500" fill="none" stroke="#a4a4a4"/><path d="M7 2.500h8M7 6.500h8M7 10.500h8" stroke="#a4a4a4" stroke-width="1.200"/></svg>
<svg class="a" style="left:710px;top:158px" width="15" height="15" viewBox="0 0 15 15" shape-rendering="crispEdges"><path d="M3.500 0v5M1 3l2.500 2.500 2.500-2.500M3.500 14v-5M1 11.500l2.500-2.500 2.500 2.500M0 7.500h7" fill="none" stroke="#a4a4a4"/><path d="M7 2.500h8M7 6.500h8M7 10.500h8" stroke="#a4a4a4" stroke-width="1.200"/></svg>
<svg class="a" style="left:736px;top:158px" width="15" height="15" viewBox="0 0 15 15"><path d="M2 1l6 6-2 2-6-6zM6 8l4 4" fill="none" stroke="#a4a4a4"/><text x="8" y="14" font-family="Liberation Sans" font-size="8" fill="#a4a4a4">c</text><path d="M4 0l1 2" stroke="#a4a4a4"/></svg>
<svg class="a" style="left:761px;top:158px" width="17" height="15" viewBox="0 0 17 15" shape-rendering="crispEdges"><path d="M0 0l4 3-4 3z" fill="#a4a4a4"/><rect x="5.500" y="3.500" width="11" height="10" fill="#c8c8c8" stroke="#a4a4a4"/><path d="M6 13l5-5 5 5z" fill="#a4a4a4"/></svg>
<svg class="a" style="left:787px;top:163px" width="9" height="5" viewBox="0 0 9 5"><path d="M0 0h9L4.500 5z" fill="#a4a4a4"/></svg>
<svg class="a" style="left:807px;top:158px" width="16" height="15" viewBox="0 0 16 15" shape-rendering="crispEdges"><path d="M3.500 3.500h12v10h-12zM3 7.500h12M8.500 7v6M3 10.500h12" fill="#f0f0f0" stroke="#a4a4a4"/><path d="M0 9l5-8 3 2-5 7z" fill="#a4a4a4"/></svg>
<div class="a" style="left:835px;top:155px;font:16px/20px 'Liberation Serif',serif">Σ</div>
<svg class="a" style="left:857px;top:163px" width="9" height="5" viewBox="0 0 9 5"><path d="M0 0h9L4.500 5z" fill="#000"/></svg>
<div class="vs" style="left:869px;top:156px;height:18px"></div>
<div class="a" style="left:873px;top:156px;width:67px;height:18px;border:1px solid #a0a0a0;background:#fff"></div>
<div class="a bm" style="left:877px;top:159px"><i style="font-size:12px;letter-spacing:-1.200px">100%</i></div>
<div class="a" style="left:924px;top:157px;width:15px;height:16px;background:#f0f0f0"></div>
<svg class="a" style="left:927px;top:163px" width="9" height="5" viewBox="0 0 9 5"><path d="M0 0h9L4.500 5z" fill="#000"/></svg>
<div class="vs" style="left:942px;top:156px;height:18px"></div>
<div class="a" style="left:946px;top:156px;width:80px;height:18px;border:1px solid #a0a0a0;box-shadow:inset -1px -1px 0 #fff"></div>
<div class="a" style="left:952px;top:164px;width:53px;height:1px;background:#a4a4a4"></div>
<svg class="a" style="left:1012px;top:163px" width="8" height="4" viewBox="0 0 8 4"><path d="M0 0h8L4 4z" fill="#a4a4a4"/></svg>
<svg class="a" style="left:1032px;top:158px" width="14" height="14" viewBox="0 0 14 14" shape-rendering="crispEdges"><rect x="1" y="1" width="12" height="12" fill="#f4f4f4" stroke="#a4a4a4" stroke-width="2"/><path d="M2 2l10 10" stroke="#a4a4a4"/></svg>
<svg class="a" style="left:1056px;top:163px" width="9" height="5" viewBox="0 0 9 5"><path d="M0 0h9L4.500 5z" fill="#a4a4a4"/></svg>
<svg class="a" style="left:1074px;top:158px" width="14" height="14" viewBox="0 0 14 14" shape-rendering="crispEdges"><rect x="1" y="1" width="12" height="12" fill="#f4f4f4" stroke="#a4a4a4" stroke-width="2"/><path d="M2 2l10 10" stroke="#a4a4a4"/></svg>
<svg class="a" style="left:1098px;top:163px" width="9" height="5" viewBox="0 0 9 5"><path d="M0 0h9L4.500 5z" fill="#a4a4a4"/></svg>
<svg class="a" style="left:458px;top:186px" width="11" height="14" viewBox="0 0 11 14"><ellipse cx="5.500" cy="6" rx="4.500" ry="3" fill="none" stroke="#a4a4a4" stroke-width="1.200"/><path d="M5.500 0.500v11M3.500 11.500h4" stroke="#a4a4a4" stroke-width="1.200"/></svg>
<div class="a bm" style="left:474px;top:186px;color:#a4a4a4;text-shadow:1px 1px 0 #fff">特殊符号</div>
<div class="a" style="left:532px;top:180px;font:bold 19px/22px 'Liberation Sans',sans-serif;transform:scaleX(0.47);transform-origin:0 0;letter-spacing:0">NO</div>
<div class="a bm" style="left:549px;top:186px;font-weight:bold">重新编号</div>
<div class="a" style="left:609px;top:182px;font:bold 15px/18px 'Liberation Serif',serif;color:#a4a4a4">D</div><div class="a" style="left:607px;top:191px;width:14px;height:1px;background:#a4a4a4"></div>
<div class="a bm" style="left:623px;top:186px;color:#a4a4a4;text-shadow:1px 1px 0 #fff">画删除线</div>
<svg class="a" style="left:680px;top:189px" width="9" height="5" viewBox="0 0 9 5"><path d="M0 0h9L4.500 5z" fill="#a4a4a4"/></svg>
<div class="a" style="left:441px;top:204px;width:781px;height:592px;background:#f0f0f0;border-top:1px solid #808080;border-left:1px solid #808080"></div>
<div class="a" style="left:474px;top:224px;width:679px;height:572px;background:#e0e0e0"></div>
<div class="a" style="left:478px;top:228px;width:675px;height:1px;background:#ece8d4"></div>
<div class="a" style="left:478px;top:224px;width:1px;height:572px;background:#ece8d4"></div>
<div class="a" style="left:1147px;top:224px;width:1px;height:572px;background:#ece8d4"></div>
<div class="a" style="left:1152px;top:224px;width:1px;height:572px;background:#ece8d4"></div>
<div class="a" style="left:442px;top:205px;width:32px;height:19px;background:#f0f0f0;border-right:1px solid #a0a0a0;border-bottom:1px solid #a0a0a0;border-left:1px solid #fff;border-top:1px solid #fff"></div>
<svg class="a" style="left:461px;top:210px" width="12" height="12" viewBox="0 0 12 12"><path d="M12 0L0 12M12 4L4 12M12 8L8 12" stroke="#a8a8a8" fill="none"/></svg>
<div class="a" style="left:442px;top:224px;width:32px;height:5px;background:#f4f4f4;border-right:1px solid #a0a0a0;border-bottom:1px solid #c0c0c0"></div><div class="a" style="left:457px;top:225px;width:1px;height:2px;background:#000"></div>
<div class="a" style="left:474px;top:205px;width:5px;height:19px;background:#f0f0f0;border-right:1px solid #a0a0a0;border-bottom:1px solid #a0a0a0;border-left:1px solid #fff"></div>
<div class="a c13" style="left:479px;top:205px;width:23px;height:19px;background:#f0f0f0;border-left:1px solid #fff;border-right:1px solid #a0a0a0;border-bottom:1px solid #a0a0a0;text-align:center;line-height:20px;font-size:13px"><i style="letter-spacing:0">B</i></div>
<div class="a c13" style="left:502px;top:205px;width:23px;height:19px;background:#f0f0f0;border-left:1px solid #fff;border-right:1px solid #a0a0a0;border-bottom:1px solid #a0a0a0;text-align:center;line-height:20px;font-size:13px"><i style="letter-spacing:0">C</i></div>
<div class="a c13" style="left:525px;top:205px;width:24px;height:19px;background:#f0f0f0;border-left:1px solid #fff;border-right:1px solid #a0a0a0;border-bottom:1px solid #a0a0a0;text-align:center;line-height:20px;font-size:13px"><i style="letter-spacing:0">D</i></div>
<div class="a c13" style="left:549px;top:205px;width:23px;height:19px;background:#f0f0f0;border-left:1px solid #fff;border-right:1px solid #a0a0a0;border-bottom:1px solid #a0a0a0;text-align:center;line-height:20px;font-size:13px"><i style="letter-spacing:0">E</i></div>
<div class="a c13" style="left:572px;top:205px;width:22px;height:19px;background:#f0f0f0;border-left:1px solid #fff;border-right:1px solid #a0a0a0;border-bottom:1px solid #a0a0a0;text-align:center;line-height:20px;font-size:13px"><i style="letter-spacing:0">F</i></div>
<div class="a c13" style="left:594px;top:205px;width:24px;height:19px;background:#f0f0f0;border-left:1px solid #fff;border-right:1px solid #a0a0a0;border-bottom:1px solid #a0a0a0;text-align:center;line-height:20px;font-size:13px"><i style="letter-spacing:0">G</i></div>
<div class="a c13" style="left:618px;top:205px;width:18px;height:19px;background:#f0f0f0;border-left:1px solid #fff;border-right:1px solid #a0a0a0;border-bottom:1px solid #a0a0a0;text-align:center;line-height:20px;font-size:13px"><i style="letter-spacing:0">H</i></div>
<div class="a c13" style="left:636px;top:205px;width:22px;height:19px;background:#f0f0f0;border-left:1px solid #fff;border-right:1px solid #a0a0a0;border-bottom:1px solid #f0f0f0;font-weight:bold;text-align:center;line-height:20px;font-size:13px"><i style="letter-spacing:0">I</i></div>
<div class="a c13" style="left:658px;top:205px;width:22px;height:19px;background:#f0f0f0;border-left:1px solid #fff;border-right:1px solid #a0a0a0;border-bottom:1px solid #f0f0f0;font-weight:bold;text-align:center;line-height:20px;font-size:13px"><i style="letter-spacing:0">J</i></div>
<div class="a c13" style="left:680px;top:205px;width:21px;height:19px;background:#f0f0f0;border-left:1px solid #fff;border-right:1px solid #a0a0a0;border-bottom:1px solid #f0f0f0;font-weight:bold;text-align:center;line-height:20px;font-size:13px"><i style="letter-spacing:0">K</i></div>
<div class="a c13" style="left:701px;top:205px;width:21px;height:19px;background:#f0f0f0;border-left:1px solid #fff;border-right:1px solid #a0a0a0;border-bottom:1px solid #f0f0f0;font-weight:bold;text-align:center;line-height:20px;font-size:13px"><i style="letter-spacing:0">L</i></div>
<div class="a c13" style="left:722px;top:205px;width:21px;height:19px;background:#f0f0f0;border-left:1px solid #fff;border-right:1px solid #a0a0a0;border-bottom:1px solid #f0f0f0;font-weight:bold;text-align:center;line-height:20px;font-size:13px"><i style="letter-spacing:0">M</i></div>
<div class="a c13" style="left:743px;top:205px;width:21px;height:19px;background:#f0f0f0;border-left:1px solid #fff;border-right:1px solid #a0a0a0;border-bottom:1px solid #f0f0f0;font-weight:bold;text-align:center;line-height:20px;font-size:13px"><i style="letter-spacing:0">N</i></div>
<div class="a c13" style="left:764px;top:205px;width:22px;height:19px;background:#f0f0f0;border-left:1px solid #fff;border-right:1px solid #a0a0a0;border-bottom:1px solid #f0f0f0;font-weight:bold;text-align:center;line-height:20px;font-size:13px"><i style="letter-spacing:0">O</i></div>
<div class="a c13" style="left:786px;top:205px;width:21px;height:19px;background:#f0f0f0;border-left:1px solid #fff;border-right:1px solid #a0a0a0;border-bottom:1px solid #f0f0f0;font-weight:bold;text-align:center;line-height:20px;font-size:13px"><i style="letter-spacing:0">P</i></div>
<div class="a c13" style="left:807px;top:205px;width:21px;height:19px;background:#f0f0f0;border-left:1px solid #fff;border-right:1px solid #a0a0a0;border-bottom:1px solid #f0f0f0;font-weight:bold;text-align:center;line-height:20px;font-size:13px"><i style="letter-spacing:0">Q</i></div>
<div class="a c13" style="left:828px;top:205px;width:22px;height:19px;background:#f0f0f0;border-left:1px solid #fff;border-right:1px solid #a0a0a0;border-bottom:1px solid #f0f0f0;font-weight:bold;text-align:center;line-height:20px;font-size:13px"><i style="letter-spacing:0">R</i></div>
<div class="a c13" style="left:850px;top:205px;width:23px;height:19px;background:#f0f0f0;border-left:1px solid #fff;border-right:1px solid #a0a0a0;border-bottom:1px solid #f0f0f0;font-weight:bold;text-align:center;line-height:20px;font-size:13px"><i style="letter-spacing:0">S</i></div>
<div class="a c13" style="left:873px;top:205px;width:22px;height:19px;background:#f0f0f0;border-left:1px solid #fff;border-right:1px solid #a0a0a0;border-bottom:1px solid #f0f0f0;font-weight:bold;text-align:center;line-height:20px;font-size:13px"><i style="letter-spacing:0">T</i></div>
<div class="a c13" style="left:895px;top:205px;width:22px;height:19px;background:#f0f0f0;border-left:1px solid #fff;border-right:1px solid #a0a0a0;border-bottom:1px solid #f0f0f0;font-weight:bold;text-align:center;line-height:20px;font-size:13px"><i style="letter-spacing:0">U</i></div>
<div class="a c13" style="left:917px;top:205px;width:22px;height:19px;background:#f0f0f0;border-left:1px solid #fff;border-right:1px solid #a0a0a0;border-bottom:1px solid #f0f0f0;font-weight:bold;text-align:center;line-height:20px;font-size:13px"><i style="letter-spacing:0">V</i></div>
<div class="a c13" style="left:939px;top:205px;width:20px;height:19px;background:#f0f0f0;border-left:1px solid #fff;border-right:1px solid #a0a0a0;border-bottom:1px solid #f0f0f0;font-weight:bold;text-align:center;line-height:20px;font-size:13px"><i style="letter-spacing:0">W</i></div>
<div class="a c13" style="left:959px;top:205px;width:16px;height:19px;background:#f0f0f0;border-left:1px solid #fff;border-right:1px solid #a0a0a0;border-bottom:1px solid #f0f0f0;font-weight:bold;text-align:center;line-height:20px;font-size:13px"><i style="letter-spacing:0">X</i></div>
<div class="a c13" style="left:975px;top:205px;width:13px;height:19px;background:#f0f0f0;border-left:1px solid #fff;border-right:1px solid #a0a0a0;border-bottom:1px solid #f0f0f0;font-weight:bold;text-align:center;line-height:20px;font-size:13px"><i style="letter-spacing:0">Y</i></div>
<div class="a c13" style="left:988px;top:205px;width:23px;height:19px;background:#f0f0f0;border-left:1px solid #fff;border-right:1px solid #a0a0a0;border-bottom:1px solid #a0a0a0;text-align:center;line-height:20px;font-size:13px"><i style="letter-spacing:0">Z</i></div>
<div class="a c13" style="left:1011px;top:205px;width:23px;height:19px;background:#f0f0f0;border-left:1px solid #fff;border-right:1px solid #a0a0a0;border-bottom:1px solid #a0a0a0;text-align:center;line-height:20px;font-size:13px"><i style="letter-spacing:0">AA</i></div>
<div class="a c13" style="left:1034px;top:205px;width:23px;height:19px;background:#f0f0f0;border-left:1px solid #fff;border-right:1px solid #a0a0a0;border-bottom:1px solid #a0a0a0;text-align:center;line-height:20px;font-size:13px"><i style="letter-spacing:0">AB</i></div>
<div class="a c13" style="left:1057px;top:205px;width:24px;height:19px;background:#f0f0f0;border-left:1px solid #fff;border-right:1px solid #a0a0a0;border-bottom:1px solid #a0a0a0;text-align:center;line-height:20px;font-size:13px"><i style="letter-spacing:0">AC</i></div>
<div class="a c13" style="left:1081px;top:205px;width:25px;height:19px;background:#f0f0f0;border-left:1px solid #fff;border-right:1px solid #a0a0a0;border-bottom:1px solid #a0a0a0;text-align:center;line-height:20px;font-size:13px"><i style="letter-spacing:0">AD</i></div>
<div class="a c13" style="left:1106px;top:205px;width:24px;height:19px;background:#f0f0f0;border-left:1px solid #fff;border-right:1px solid #a0a0a0;border-bottom:1px solid #a0a0a0;text-align:center;line-height:20px;font-size:13px"><i style="letter-spacing:0">AE</i></div>
<div class="a c13" style="left:1130px;top:205px;width:18px;height:19px;background:#f0f0f0;border-left:1px solid #fff;border-right:1px solid #a0a0a0;border-bottom:1px solid #a0a0a0;text-align:center;line-height:20px;font-size:13px"><i style="letter-spacing:0">AF</i></div>
<div class="a" style="left:1148px;top:205px;width:5px;height:19px;border-bottom:1px solid #a0a0a0;background:#f0f0f0;border-right:1px solid #a0a0a0;border-left:1px solid #fff"></div>
<div class="a c13" style="left:442px;top:229px;width:32px;height:60px;background:#f2f2f2;border-left:1px solid #fff;border-top:1px solid #fff;border-right:1px solid #a0a0a0;border-bottom:1px solid #b8b8b8;text-align:center;line-height:60px;"><i style="letter-spacing:0.400px">2</i></div>
<div class="a c13" style="left:442px;top:289px;width:32px;height:34px;background:#f2f2f2;border-left:1px solid #fff;border-top:1px solid #fff;border-right:1px solid #a0a0a0;border-bottom:1px solid #b8b8b8;text-align:center;line-height:34px;"><i style="letter-spacing:0.400px">3</i></div>
<div class="a c13" style="left:442px;top:323px;width:32px;height:29px;background:#f2f2f2;border-left:1px solid #fff;border-top:1px solid #fff;border-right:1px solid #a0a0a0;border-bottom:1px solid #b8b8b8;text-align:center;line-height:29px;"><i style="letter-spacing:0.400px">4</i></div>
<div class="a c13" style="left:442px;top:352px;width:32px;height:29px;background:#f2f2f2;border-left:1px solid #fff;border-top:1px solid #fff;border-right:1px solid #a0a0a0;border-bottom:1px solid #b8b8b8;text-align:center;line-height:29px;"><i style="letter-spacing:0.400px">5</i></div>
<div class="a c13" style="left:442px;top:381px;width:32px;height:29px;background:#f2f2f2;border-left:1px solid #fff;border-top:1px solid #fff;border-right:1px solid #a0a0a0;border-bottom:1px solid #b8b8b8;text-align:center;line-height:29px;font-weight:bold;"><i style="letter-spacing:0.400px">6</i></div>
<div class="a c13" style="left:442px;top:410px;width:32px;height:29px;background:#f2f2f2;border-left:1px solid #fff;border-top:1px solid #fff;border-right:1px solid #a0a0a0;border-bottom:1px solid #b8b8b8;text-align:center;line-height:29px;"><i style="letter-spacing:0.400px">7</i></div>
<div class="a c13" style="left:442px;top:439px;width:32px;height:29px;background:#f2f2f2;border-left:1px solid #fff;border-top:1px solid #fff;border-right:1px solid #a0a0a0;border-bottom:1px solid #b8b8b8;text-align:center;line-height:29px;"><i style="letter-spacing:0.400px">8</i></div>
<div class="a c13" style="left:442px;top:468px;width:32px;height:29px;background:#f2f2f2;border-left:1px solid #fff;border-top:1px solid #fff;border-right:1px solid #a0a0a0;border-bottom:1px solid #b8b8b8;text-align:center;line-height:29px;"><i style="letter-spacing:0.400px">9</i></div>
<div class="a c13" style="left:442px;top:497px;width:32px;height:29px;background:#f2f2f2;border-left:1px solid #fff;border-top:1px solid #fff;border-right:1px solid #a0a0a0;border-bottom:1px solid #b8b8b8;text-align:center;line-height:29px;"><i style="letter-spacing:0.400px">10</i></div>
<div class="a c13" style="left:442px;top:526px;width:32px;height:32px;background:#f2f2f2;border-left:1px solid #fff;border-top:1px solid #fff;border-right:1px solid #a0a0a0;border-bottom:1px solid #b8b8b8;text-align:center;line-height:32px;"><i style="letter-spacing:0.400px">11</i></div>
<div class="a c13" style="left:442px;top:558px;width:32px;height:29px;background:#f2f2f2;border-left:1px solid #fff;border-top:1px solid #fff;border-right:1px solid #a0a0a0;border-bottom:1px solid #b8b8b8;text-align:center;line-height:29px;"><i style="letter-spacing:0.400px">12</i></div>
<div class="a c13" style="left:442px;top:587px;width:32px;height:28px;background:#f2f2f2;border-left:1px solid #fff;border-top:1px solid #fff;border-right:1px solid #a0a0a0;border-bottom:1px solid #b8b8b8;text-align:center;line-height:28px;"><i style="letter-spacing:0.400px">13</i></div>
<div class="a c13" style="left:442px;top:615px;width:32px;height:28px;background:#f2f2f2;border-left:1px solid #fff;border-top:1px solid #fff;border-right:1px solid #a0a0a0;border-bottom:1px solid #b8b8b8;text-align:center;line-height:28px;"><i style="letter-spacing:0.400px">14</i></div>
<div class="a c13" style="left:442px;top:643px;width:32px;height:28px;background:#f2f2f2;border-left:1px solid #fff;border-top:1px solid #fff;border-right:1px solid #a0a0a0;border-bottom:1px solid #b8b8b8;text-align:center;line-height:28px;"><i style="letter-spacing:0.400px">15</i></div>
<div class="a c13" style="left:442px;top:671px;width:32px;height:28px;background:#f2f2f2;border-left:1px solid #fff;border-top:1px solid #fff;border-right:1px solid #a0a0a0;border-bottom:1px solid #b8b8b8;text-align:center;line-height:28px;"><i style="letter-spacing:0.400px">16</i></div>
<div class="a c13" style="left:442px;top:699px;width:32px;height:28px;background:#f2f2f2;border-left:1px solid #fff;border-top:1px solid #fff;border-right:1px solid #a0a0a0;border-bottom:1px solid #b8b8b8;text-align:center;line-height:28px;"><i style="letter-spacing:0.400px">17</i></div>
<div class="a c13" style="left:442px;top:727px;width:32px;height:28px;background:#f2f2f2;border-left:1px solid #fff;border-top:1px solid #fff;border-right:1px solid #a0a0a0;border-bottom:1px solid #b8b8b8;text-align:center;line-height:28px;"><i style="letter-spacing:0.400px">18</i></div>
<div class="a c13" style="left:442px;top:755px;width:32px;height:28px;background:#f2f2f2;border-left:1px solid #fff;border-top:1px solid #fff;border-right:1px solid #a0a0a0;border-bottom:1px solid #b8b8b8;text-align:center;line-height:28px;"><i style="letter-spacing:0.400px">19</i></div>
<div class="a c13" style="left:442px;top:783px;width:32px;height:29px;background:#f2f2f2;border-left:1px solid #fff;border-top:1px solid #fff;border-right:1px solid #a0a0a0;border-bottom:1px solid #b8b8b8;text-align:center;line-height:29px;"><i style="letter-spacing:0.400px">20</i></div>
<div class="a" style="left:716px;top:247px;width:40px;text-align:center;font:bold 22px/26px 'Liberation Serif','Noto Serif CJK SC',serif">目</div>
<div class="a" style="left:871px;top:247px;width:40px;text-align:center;font:bold 22px/26px 'Liberation Serif','Noto Serif CJK SC',serif">录</div>
<div class="a" style="left:480px;top:323px;width:45px;height:28px;background:#fff"></div>
<div class="a" style="left:988px;top:323px;width:158px;height:28px;background:#fff"></div>
<div class="a c13" style="left:541px;top:332px"><i>DQ1</i></div>
<div class="a c13" style="left:652px;top:332px">管理资料</div>
<div class="a" style="left:480px;top:352px;width:45px;height:28px;background:#fff"></div>
<div class="a" style="left:988px;top:352px;width:158px;height:28px;background:#fff"></div>
<div class="a c13" style="left:541px;top:361px"><i>DQ1.1</i></div>
<div class="a c13" style="left:652px;top:361px">电气工程概况表</div>
<div class="a" style="left:480px;top:381px;width:45px;height:28px;background:#fff"></div>
<div class="a" style="left:988px;top:381px;width:158px;height:28px;background:#fff"></div>
<div class="a c13" style="left:541px;top:390px"><i>DQ1.2</i></div>
<div class="a c13" style="left:652px;top:390px">建筑电气分部工程质量验收记录</div>
<div class="a" style="left:480px;top:410px;width:45px;height:28px;background:#fff"></div>
<div class="a" style="left:988px;top:410px;width:158px;height:28px;background:#fff"></div>
<div class="a c13" style="left:541px;top:419px"><i>DQ1.3</i></div>
<div class="a c13" style="left:652px;top:419px">质量控制资料核查记录</div>
<div class="a" style="left:480px;top:439px;width:45px;height:28px;background:#fff"></div>
<div class="a" style="left:988px;top:439px;width:158px;height:28px;background:#fff"></div>
<div class="a c13" style="left:541px;top:448px"><i>DQ1.4</i></div>
<div class="a c13" style="left:652px;top:448px">安全和功能检验资料核查表</div>
<div class="a" style="left:480px;top:468px;width:45px;height:28px;background:#fff"></div>
<div class="a" style="left:988px;top:468px;width:158px;height:28px;background:#fff"></div>
<div class="a c13" style="left:541px;top:477px"><i>DQ1.5</i></div>
<div class="a c13" style="left:652px;top:477px">建筑电气工程观感质量检查记录</div>
<div class="a" style="left:480px;top:497px;width:45px;height:28px;background:#fff"></div>
<div class="a" style="left:988px;top:497px;width:158px;height:28px;background:#fff"></div>
<div class="a c13" style="left:541px;top:506px"><i>DQ1.6</i></div>
<div class="a c13" style="left:652px;top:506px">工程项目施工管理人员名单及岗位证书</div>
<div class="a" style="left:480px;top:526px;width:45px;height:31px;background:#fff"></div>
<div class="a" style="left:988px;top:526px;width:158px;height:31px;background:#fff"></div>
<div class="a c13" style="left:541px;top:536px"><i>DQ1.7</i></div>
<div class="a c13" style="left:652px;top:529px">安装电工、焊工、起重吊装工、和电气调试人员及岗位证</div>
<div class="a c13" style="left:639px;top:542px">汇总表</div>
<div class="a" style="left:480px;top:558px;width:45px;height:28px;background:#fff"></div>
<div class="a" style="left:988px;top:558px;width:158px;height:28px;background:#fff"></div>
<div class="a c13" style="left:541px;top:567px"><i>DQ1.8</i></div>
<div class="a c13" style="left:652px;top:567px">建筑电气工程施工现场质量管理记录</div>
<div class="a" style="left:480px;top:587px;width:45px;height:27px;background:#fff"></div>
<div class="a" style="left:988px;top:587px;width:158px;height:27px;background:#fff"></div>
<div class="a c13" style="left:541px;top:595px"><i>DQ1.9</i></div>
<div class="a c13" style="left:652px;top:595px">施工组织设计、施工方案及审批表</div>
<div class="a" style="left:480px;top:615px;width:45px;height:27px;background:#fff"></div>
<div class="a" style="left:988px;top:615px;width:158px;height:27px;background:#fff"></div>
<div class="a" style="left:526px;top:615px;width:461px;height:27px;background:#fff"></div>
<div class="a" style="left:480px;top:643px;width:45px;height:27px;background:#fff"></div>
<div class="a" style="left:988px;top:643px;width:158px;height:27px;background:#fff"></div>
<div class="a c13" style="left:541px;top:651px"><i>DQ2</i></div>
<div class="a c13" style="left:652px;top:651px">质量控制资料</div>
<div class="a" style="left:480px;top:671px;width:45px;height:27px;background:#fff"></div>
<div class="a" style="left:988px;top:671px;width:158px;height:27px;background:#fff"></div>
<div class="a c13" style="left:541px;top:679px"><i>DQ2.1</i></div>
<div class="a c13" style="left:652px;top:679px">图纸会审、设计变更、洽商记录汇总表</div>
<div class="a" style="left:480px;top:699px;width:45px;height:27px;background:#fff"></div>
<div class="a" style="left:988px;top:699px;width:158px;height:27px;background:#fff"></div>
<div class="a c13" style="left:541px;top:707px"><i>DQ2.1.1</i></div>
<div class="a c13" style="left:652px;top:707px">图纸会审、设计变更、洽商记录</div>
<div class="a" style="left:480px;top:727px;width:45px;height:27px;background:#fff"></div>
<div class="a" style="left:988px;top:727px;width:158px;height:27px;background:#fff"></div>
<div class="a c13" style="left:541px;top:735px"><i>DQ2.1.2</i></div>
<div class="a c13" style="left:652px;top:735px">技术交底记录</div>
<div class="a" style="left:480px;top:755px;width:45px;height:27px;background:#fff"></div>
<div class="a" style="left:988px;top:755px;width:158px;height:27px;background:#fff"></div>
<div class="a c13" style="left:541px;top:763px"><i>DQ2.2</i></div>
<div class="a c13" style="left:652px;top:763px">材料、设备出厂合格证书及进场检（试）验报告</div>
<div class="a" style="left:480px;top:783px;width:45px;height:28px;background:#fff"></div>
<div class="a" style="left:988px;top:783px;width:158px;height:28px;background:#fff"></div>
<div class="a c13" style="left:541px;top:792px"><i>DQ2.2.1</i></div>
<div class="a c13" style="left:652px;top:792px">材料、设备质量证明文件</div>
<div class="a c13" style="left:480px;top:299px;width:45px;text-align:center;white-space:pre">序号</div>
<div class="a c13" style="left:526px;top:299px;width:109px;text-align:center;white-space:pre">编<span style="display:inline-block;width:13px"></span>号</div>
<div class="a c13" style="left:636px;top:299px;width:351px;text-align:center;white-space:pre">名<span style="display:inline-block;width:13px"></span><span style="display:inline-block;width:13px"></span><span style="display:inline-block;width:13px"></span><span style="display:inline-block;width:13px"></span><span style="display:inline-block;width:13px"></span><span style="display:inline-block;width:13px"></span>称</div>
<div class="a c13" style="left:988px;top:299px;width:68px;text-align:center;white-space:pre">页码</div>
<div class="a c13" style="left:1057px;top:299px;width:89px;text-align:center;white-space:pre">备<span style="display:inline-block;width:13px"></span>注</div>
<div class="a" style="left:480px;top:322px;width:666px;height:1px;background:#000"></div>
<div class="a" style="left:480px;top:351px;width:666px;height:1px;background:#000"></div>
<div class="a" style="left:480px;top:380px;width:666px;height:1px;background:#000"></div>
<div class="a" style="left:480px;top:409px;width:666px;height:1px;background:#000"></div>
<div class="a" style="left:480px;top:438px;width:666px;height:1px;background:#000"></div>
<div class="a" style="left:480px;top:467px;width:666px;height:1px;background:#000"></div>
<div class="a" style="left:480px;top:496px;width:666px;height:1px;background:#000"></div>
<div class="a" style="left:480px;top:525px;width:666px;height:1px;background:#000"></div>
<div class="a" style="left:480px;top:557px;width:666px;height:1px;background:#000"></div>
<div class="a" style="left:480px;top:586px;width:666px;height:1px;background:#000"></div>
<div class="a" style="left:480px;top:614px;width:666px;height:1px;background:#000"></div>
<div class="a" style="left:480px;top:642px;width:666px;height:1px;background:#000"></div>
<div class="a" style="left:480px;top:670px;width:666px;height:1px;background:#000"></div>
<div class="a" style="left:480px;top:698px;width:666px;height:1px;background:#000"></div>
<div class="a" style="left:480px;top:726px;width:666px;height:1px;background:#000"></div>
<div class="a" style="left:480px;top:754px;width:666px;height:1px;background:#000"></div>
<div class="a" style="left:480px;top:782px;width:666px;height:1px;background:#000"></div>
<div class="a" style="left:525px;top:289px;width:1px;height:520px;background:#000"></div>
<div class="a" style="left:635px;top:289px;width:1px;height:520px;background:#000"></div>
<div class="a" style="left:987px;top:289px;width:1px;height:520px;background:#000"></div>
<div class="a" style="left:1056px;top:289px;width:1px;height:520px;background:#000"></div>
<div class="a" style="left:478px;top:287px;width:670px;height:2px;background:#000"></div>
<div class="a" style="left:478px;top:287px;width:2px;height:520px;background:#000"></div>
<div class="a" style="left:1146px;top:287px;width:2px;height:520px;background:#000"></div>
<div class="a" style="left:635px;top:379px;width:354px;height:32px;border:1px solid #000"></div>
<div class="a" style="left:636px;top:380px;width:352px;height:30px;border:1px solid #fff"></div>
<div class="a" style="left:637px;top:381px;width:350px;height:28px;border:1px solid #000"></div>
<div class="a" style="left:985px;top:407px;width:5px;height:5px;background:#000"></div><div class="a" style="left:987px;top:407px;width:1px;height:5px;background:#fff"></div><div class="a" style="left:985px;top:409px;width:5px;height:1px;background:#fff"></div>
</body></html>
